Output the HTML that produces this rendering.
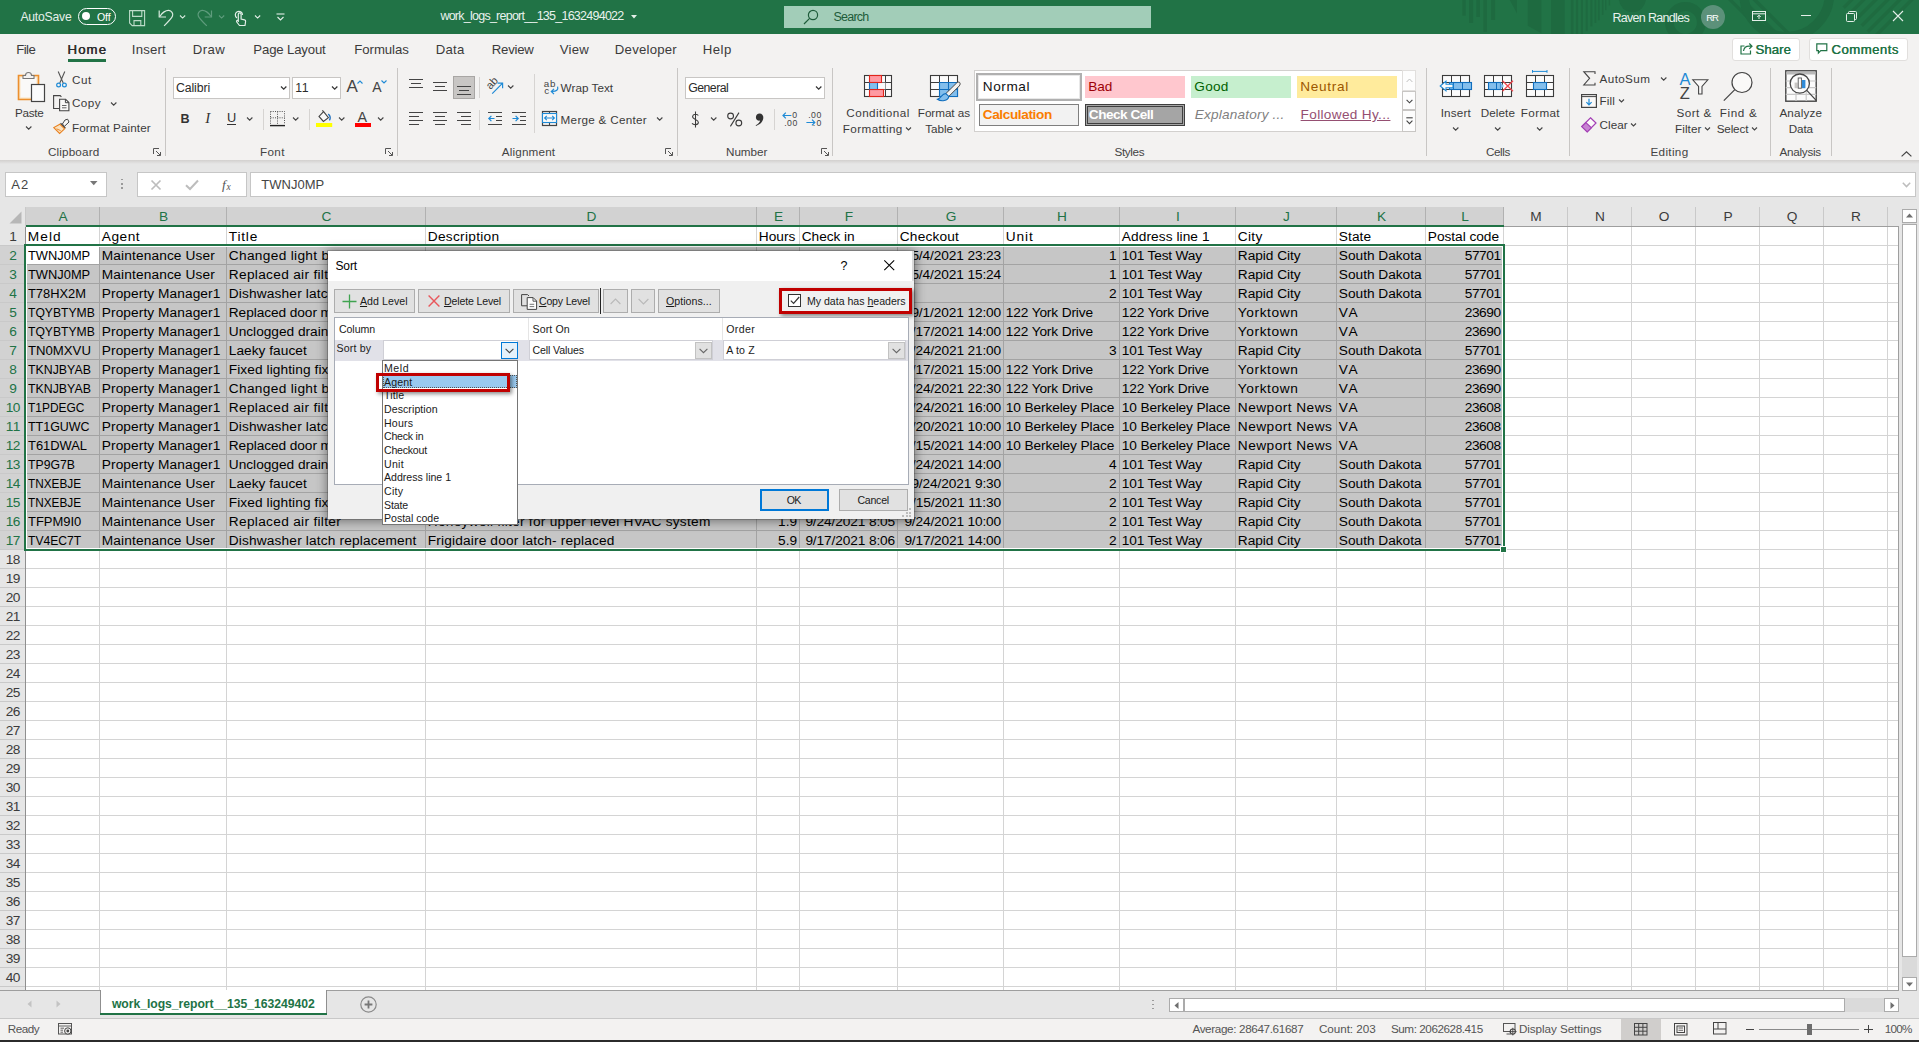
<!DOCTYPE html>
<html><head><meta charset="utf-8"><title>Excel - Sort</title>
<style>
html,body{margin:0;padding:0;}
body{width:1919px;height:1042px;overflow:hidden;position:relative;background:#e6e6e6;font-family:"Liberation Sans",sans-serif;color:#3b3b3b;font-size:12px;}
.a{position:absolute;box-sizing:border-box;}
.t{position:absolute;white-space:nowrap;line-height:20px;}
svg{overflow:visible;}
</style></head>
<body>
<div class="a" style="left:0px;top:0px;width:1919px;height:34px;background:#217346;"></div>
<svg class="a" style="left:1440px;top:0px;" width="479" height="34" viewBox="0 0 479 34" fill="none"><defs><clipPath id="tbc"><rect x="0" y="0" width="479" height="34"/></clipPath><clipPath id="tbr"><path d="M396 0 H479 V34 H430 Z"/></clipPath></defs><g fill="#1e6a40" clip-path="url(#tbc)"><rect x="22.4" y="0" width="3.3" height="15.6"/><rect x="29.1" y="0" width="4.1" height="23"/><rect x="36.3" y="0" width="3.7" height="17"/><rect x="43.4" y="0" width="3.6" height="31.8"/><rect x="51.2" y="0" width="3.9" height="20"/><path d="M69.8 0 H77 V13.5 Z"/><path d="M87.8 0 H101.4 V33.2 L87.8 25.7 Z"/><rect x="111.1" y="0" width="13.6" height="34"/><rect x="130.8" y="0" width="2.7" height="34"/><rect x="135.9" y="0" width="2.3" height="34"/><rect x="140.9" y="0" width="2" height="34"/><rect x="145.7" y="0" width="2" height="31.2"/><rect x="150.4" y="0" width="2" height="26.4"/><rect x="154.5" y="0" width="1.8" height="23"/><rect x="157.9" y="0" width="1.8" height="20.3"/><rect x="161.9" y="0" width="1.6" height="14.9"/><rect x="165" y="0" width="1.4" height="10.2"/><rect x="168.7" y="0" width="1.4" height="5.4"/><circle cx="192.4" cy="-1.4" r="13.5"/><circle cx="245.4" cy="22.4" r="15.9" fill="none" stroke="#1e6a40" stroke-width="8.8"/><path d="M288 0 H292.8 L326.8 34 H322 Z"/><path d="M300.3 0 H305.1 L339.1 34 H334.3 Z"/><path d="M312.5 0 H317.3 L351.3 34 H346.5 Z"/><circle cx="346.7" cy="-6.1" r="42.8" fill="none" stroke="#1e6a40" stroke-width="9.5"/><g clip-path="url(#tbr)"><path d="M409 0 H413.8 L379.8 34 H375 Z" opacity=".85"/><path d="M421 0 H425.8 L391.8 34 H387 Z" opacity=".85"/><path d="M433 0 H437.8 L403.8 34 H399 Z" opacity=".85"/><path d="M445 0 H449.8 L415.8 34 H411 Z" opacity=".85"/><path d="M457 0 H461.8 L427.8 34 H423 Z" opacity=".85"/><path d="M469 0 H473.8 L439.8 34 H435 Z" opacity=".85"/></g></g></svg>
<span class="t" style="left:20.39px;top:7.00px;font-size:12.20px;letter-spacing:-0.217px;color:#e4efe9;">AutoSave</span>
<div class="a" style="left:78px;top:8px;width:38px;height:16.5px;border:1px solid #fff;border-radius:9px;"></div>
<div class="a" style="left:82.3px;top:12px;width:8.2px;height:8.2px;background:#fff;border-radius:50%;"></div>
<span class="t" style="left:96.97px;top:7.00px;font-size:10.60px;letter-spacing:-0.136px;color:#fff;">Off</span>
<svg class="a" style="left:129px;top:10px;" width="17" height="17" viewBox="0 0 17 17" fill="none"><path d="M0.6 0.6 H15.6 V15.6 H3.2 L0.6 13 Z" stroke="#bddbc9" stroke-width="1.1"/><path d="M3.6 0.6 V6.4 H12.8 V0.6 M5 15.6 V10.6 H11.8 V15.6" stroke="#bddbc9" stroke-width="1.1"/></svg>
<svg class="a" style="left:158px;top:9px;" width="18" height="18" viewBox="0 0 18 18" fill="none"><path d="M1.2 1.4 V8 H8" stroke="#d9eadf" stroke-width="1.2"/><path d="M1.8 7.5 C4 3.5 8 1.2 10.8 1.4 C13.5 1.6 15.5 4.5 14.5 7 C14 8.5 12 11 6.1 16.9" stroke="#d9eadf" stroke-width="1.2"/></svg>
<svg class="a" style="left:178.9px;top:13.7px;" width="7.2" height="5.6" viewBox="0 0 7.2 5.6" fill="none"><path d="M1 1.5 L3.6 4.1 L6.2 1.5" stroke="#d9eadf" stroke-width="1.1"/></svg>
<svg class="a" style="left:197px;top:9px;" width="18" height="18" viewBox="0 0 18 18" fill="none"><path d="M14.5 1.4 V8 H7.7" stroke="#5f9c7d" stroke-width="1.2"/><path d="M14 7.5 C11.8 3.5 7.8 1.2 5 1.4 C2.3 1.6 0.3 4.5 1.3 7 C1.8 8.5 3.8 11 9.8 16.9" stroke="#5f9c7d" stroke-width="1.2"/></svg>
<svg class="a" style="left:217.9px;top:13.7px;" width="7.2" height="5.6" viewBox="0 0 7.2 5.6" fill="none"><path d="M1 1.5 L3.6 4.1 L6.2 1.5" stroke="#5f9c7d" stroke-width="1.1"/></svg>
<svg class="a" style="left:233px;top:9px;" width="14" height="18" viewBox="0 0 14 18" fill="none"><path d="M4 9 A3.6 3.6 0 1 1 9.5 6" stroke="#e4efe9" stroke-width="1.2"/><path d="M5.3 13 V5.2 A1.4 1.4 0 0 1 8.1 5.2 V10 L11.5 10.8 A1.5 1.5 0 0 1 12.6 12.5 L12 16.5 H6.5 L3.6 12.8 A1 1 0 0 1 5.3 11.8" stroke="#e4efe9" stroke-width="1.2"/></svg>
<svg class="a" style="left:253.9px;top:13.7px;" width="7.2" height="5.6" viewBox="0 0 7.2 5.6" fill="none"><path d="M1 1.5 L3.6 4.1 L6.2 1.5" stroke="#e4efe9" stroke-width="1.1"/></svg>
<svg class="a" style="left:276px;top:13px;" width="9" height="9" viewBox="0 0 9 9" fill="none"><path d="M0.5 1 H8.5" stroke="#e4efe9" stroke-width="1.1"/><path d="M1.5 4 L4.5 7 L7.5 4" stroke="#e4efe9" stroke-width="1.1"/></svg>
<span class="t" style="left:440.38px;top:6.00px;font-size:12.50px;letter-spacing:-0.750px;color:#e9f2ed;">work_logs_report__135_1632494022</span>
<svg class="a" style="left:630.5px;top:14.5px;" width="6" height="4" viewBox="0 0 6 4" fill="none"><path d="M0 0 H6 L3 3.5 Z" fill="#e4efe9"/></svg>
<div class="a" style="left:784px;top:6px;width:367px;height:22px;background:#a2cdb8;"></div>
<svg class="a" style="left:803px;top:9px;" width="16" height="16" viewBox="0 0 16 16" fill="none"><circle cx="10" cy="6" r="4.6" stroke="#1e5c3a" stroke-width="1.2"/><path d="M6.6 9.4 L1 15" stroke="#1e5c3a" stroke-width="1.2"/></svg>
<span class="t" style="left:833.38px;top:7.00px;font-size:12.50px;letter-spacing:-0.747px;color:#1e5c3a;">Search</span>
<span class="t" style="left:1612.38px;top:8.00px;font-size:12.50px;letter-spacing:-0.674px;color:#e9f2ed;">Raven Randles</span>
<div class="a" style="left:1700.5px;top:5px;width:24px;height:24px;background:#5c917a;border-radius:50%;"></div>
<span class="t" style="left:1706.33px;top:8.00px;font-size:9.50px;letter-spacing:-1.189px;color:#fff;">RR</span>
<svg class="a" style="left:1752px;top:11px;" width="14" height="10" viewBox="0 0 14 10" fill="none"><rect x="0.5" y="0.5" width="13" height="9" stroke="#e4efe9"/><path d="M0.5 2.8 H13.5" stroke="#e4efe9"/><path d="M7 8 V4.3 M5.2 6 L7 4.2 L8.8 6" stroke="#e4efe9"/></svg>
<div class="a" style="left:1801px;top:15px;width:10px;height:1px;background:#e4efe9;"></div>
<svg class="a" style="left:1846px;top:11px;" width="11" height="11" viewBox="0 0 11 11" fill="none"><rect x="0.5" y="2.5" width="8" height="8" rx="1" stroke="#e4efe9"/><path d="M2.5 2.5 V1.5 A1 1 0 0 1 3.5 0.5 H9.5 A1 1 0 0 1 10.5 1.5 V7.5 A1 1 0 0 1 9.5 8.5 H8.5" stroke="#e4efe9"/></svg>
<svg class="a" style="left:1893px;top:11px;" width="10" height="10" viewBox="0 0 10 10" fill="none"><path d="M0 0 L10 10 M10 0 L0 10" stroke="#e4efe9" stroke-width="1.1"/></svg>
<div class="a" style="left:0px;top:34px;width:1919px;height:126px;background:#f3f2f1;"></div>
<div class="a" style="left:0px;top:160px;width:1919px;height:4px;background:linear-gradient(#d2d0ce,#e6e6e6);"></div>
<span class="t" style="left:16.34px;top:40.00px;font-size:13.20px;letter-spacing:-0.599px;color:#3b3b3b;">File</span>
<span class="t" style="left:67.34px;top:40.00px;font-size:13.20px;letter-spacing:1.088px;color:#2b2b2b;text-shadow:0.5px 0 0 #2b2b2b;">Home</span>
<span class="t" style="left:131.84px;top:40.00px;font-size:13.20px;letter-spacing:0.194px;color:#3b3b3b;">Insert</span>
<span class="t" style="left:192.84px;top:40.00px;font-size:13.20px;letter-spacing:0.390px;color:#3b3b3b;">Draw</span>
<span class="t" style="left:253.34px;top:40.00px;font-size:13.20px;letter-spacing:-0.161px;color:#3b3b3b;">Page Layout</span>
<span class="t" style="left:354.34px;top:40.00px;font-size:13.20px;letter-spacing:-0.074px;color:#3b3b3b;">Formulas</span>
<span class="t" style="left:435.84px;top:40.00px;font-size:13.20px;letter-spacing:0.198px;color:#3b3b3b;">Data</span>
<span class="t" style="left:491.84px;top:40.00px;font-size:13.20px;letter-spacing:-0.260px;color:#3b3b3b;">Review</span>
<span class="t" style="left:559.84px;top:40.00px;font-size:13.20px;letter-spacing:0.198px;color:#3b3b3b;">View</span>
<span class="t" style="left:614.84px;top:40.00px;font-size:13.20px;letter-spacing:0.228px;color:#3b3b3b;">Developer</span>
<span class="t" style="left:702.84px;top:40.00px;font-size:13.20px;letter-spacing:0.442px;color:#3b3b3b;">Help</span>
<div class="a" style="left:68px;top:59px;width:38px;height:3px;background:#217346;"></div>
<div class="a" style="left:1732px;top:38px;width:67.5px;height:22.5px;background:#fff;border:1px solid #e1dfdd;border-radius:3px;"></div>
<svg class="a" style="left:1739.5px;top:42px;" width="13" height="13" viewBox="0 0 13 13" fill="none"><path d="M4.5 4 H1 V12 H10.5 V8.5" stroke="#217346" stroke-width="1.2"/><path d="M3.5 9 C4 6 6 4.2 9 4.2 H12 M9.3 1.5 L12 4.2 L9.3 6.9" stroke="#217346" stroke-width="1.2"/></svg>
<span class="t" style="left:1755.34px;top:40.00px;font-size:13.20px;letter-spacing:0.062px;color:#217346;text-shadow:0.35px 0 0 #217346;">Share</span>
<div class="a" style="left:1808.5px;top:38px;width:99px;height:22.5px;background:#fff;border:1px solid #e1dfdd;border-radius:3px;"></div>
<svg class="a" style="left:1816px;top:43px;" width="12" height="12" viewBox="0 0 12 12" fill="none"><path d="M0.8 0.8 H10.8 V7.6 H4.8 L2.4 10 V7.6 H0.8 Z" stroke="#217346" stroke-width="1.2"/></svg>
<span class="t" style="left:1831.34px;top:40.00px;font-size:13.20px;letter-spacing:0.455px;color:#217346;text-shadow:0.35px 0 0 #217346;">Comments</span>
<div class="a" style="left:5px;top:171.5px;width:102px;height:25.5px;background:#fff;border:1px solid #c6c6c6;"></div>
<span class="t" style="left:11.35px;top:175.00px;font-size:13.00px;letter-spacing:1.024px;color:#444;">A2</span>
<svg class="a" style="left:89.5px;top:180.5px;" width="8" height="5" viewBox="0 0 8 5" fill="none"><path d="M0 0 H7.5 L3.75 4.2 Z" fill="#777"/></svg>
<div class="a" style="left:121.2px;top:178.7px;width:1.8px;height:1.8px;background:#9a9a9a;"></div>
<div class="a" style="left:121.2px;top:182.9px;width:1.8px;height:1.8px;background:#9a9a9a;"></div>
<div class="a" style="left:121.2px;top:187px;width:1.8px;height:1.8px;background:#9a9a9a;"></div>
<div class="a" style="left:137px;top:171.5px;width:109.5px;height:25.5px;background:#fff;border:1px solid #c6c6c6;"></div>
<svg class="a" style="left:151px;top:179.5px;" width="10" height="10" viewBox="0 0 10 10" fill="none"><path d="M0.5 0.5 L9.5 9.5 M9.5 0.5 L0.5 9.5" stroke="#bdbdbd" stroke-width="1.7"/></svg>
<svg class="a" style="left:185px;top:179px;" width="14" height="11" viewBox="0 0 14 11" fill="none"><path d="M1 6.2 L5 10 L13 1.5" stroke="#bdbdbd" stroke-width="2"/></svg>
<span class="t" style="left:222.00px;top:175.00px;font-size:13.50px;color:#555;font-style:italic;font-family:'Liberation Serif',serif;">f</span>
<span class="t" style="left:226.50px;top:177.00px;font-size:9.50px;color:#555;font-style:italic;font-family:'Liberation Serif',serif;">x</span>
<div class="a" style="left:250px;top:171.5px;width:1665.5px;height:25.5px;background:#fff;border:1px solid #c6c6c6;"></div>
<span class="t" style="left:261.35px;top:175.00px;font-size:13.00px;letter-spacing:0.014px;color:#444;">TWNJ0MP</span>
<svg class="a" style="left:1902px;top:181.5px;" width="9" height="6" viewBox="0 0 9 6" fill="none"><path d="M0.8 0.8 L4.5 4.6 L8.2 0.8" stroke="#bdbdbd" stroke-width="1.5"/></svg>
<svg class="a" style="left:17px;top:71px;" width="29" height="32" viewBox="0 0 29 32" fill="none"><path d="M1.5 4.5 H21.5 V28.5 H1.5 Z" fill="#fbe3c0" stroke="#ec8f2e" stroke-width="1.6"/><path d="M3.5 6.5 H19.5 V26.5 H3.5 Z" fill="#faf9f8"/><path d="M6 7.5 V4.5 H8.5 A3 3 0 0 1 14.5 4.5 H17 V7.5 Z" fill="#f3f2f1" stroke="#777" stroke-width="1.1"/><rect x="14.5" y="13.5" width="13" height="17" fill="#fbfbfb" stroke="#444" stroke-width="1.2"/></svg>
<span class="t" style="left:14.91px;top:103.00px;font-size:11.70px;letter-spacing:-0.276px;color:#3b3b3b;">Paste</span>
<svg class="a" style="left:24.6px;top:125.45px;" width="7.4" height="5.7" viewBox="0 0 7.4 5.7" fill="none"><path d="M1 1.5 L3.7 4.2 L6.4 1.5" stroke="#444" stroke-width="1.1"/></svg>
<svg class="a" style="left:55.5px;top:70.5px;" width="11" height="17" viewBox="0 0 11 17" fill="none"><path d="M2.2 0.5 L7.2 12 M8.8 0.5 L3.8 12" stroke="#555" stroke-width="1.1"/><circle cx="2.6" cy="14" r="1.9" stroke="#1e8ad6" stroke-width="1.2"/><circle cx="8.4" cy="14" r="1.9" stroke="#1e8ad6" stroke-width="1.2"/></svg>
<span class="t" style="left:71.92px;top:70.00px;font-size:11.70px;letter-spacing:0.542px;color:#3b3b3b;">Cut</span>
<svg class="a" style="left:52.5px;top:95px;" width="17" height="17" viewBox="0 0 17 17" fill="none"><path d="M6.5 13.5 H0.6 V0.6 H7.2 L8.4 1.8" stroke="#444" stroke-width="1.1"/><path d="M6.6 4.2 H12.6 L15.9 7.5 V15.8 H6.6 Z" stroke="#444" stroke-width="1.1" fill="#faf9f8"/><path d="M12.4 4.4 V7.7 H15.7" stroke="#444" stroke-width="1"/><path d="M9 10.5 H13.5 M9 12.8 H13.5" stroke="#555" stroke-width="0.9"/></svg>
<span class="t" style="left:71.92px;top:93.00px;font-size:11.70px;letter-spacing:0.497px;color:#3b3b3b;">Copy</span>
<svg class="a" style="left:109.6px;top:100.65px;" width="7.4" height="5.7" viewBox="0 0 7.4 5.7" fill="none"><path d="M1 1.5 L3.7 4.2 L6.4 1.5" stroke="#444" stroke-width="1.1"/></svg>
<svg class="a" style="left:53px;top:119px;" width="17" height="16" viewBox="0 0 17 16" fill="none"><path d="M12 1 L14.6 0.2 L16 3 L11.6 7.2 L9.4 5 Z" stroke="#444" stroke-width="1" fill="#faf9f8"/><path d="M7.5 4.3 L12.4 9.2" stroke="#444" stroke-width="1.3"/><path d="M6.8 5.2 L0.8 8.6 L6.6 14.4 L11.6 9.8 Z" fill="#fbe3c0" stroke="#e8801f" stroke-width="1.1"/><path d="M3.5 9.8 L7.6 11.6" stroke="#e8801f" stroke-width="0.9"/></svg>
<span class="t" style="left:71.92px;top:118.00px;font-size:11.70px;letter-spacing:0.115px;color:#3b3b3b;">Format Painter</span>
<span class="t" style="left:47.91px;top:142.00px;font-size:11.70px;letter-spacing:0.157px;color:#444;">Clipboard</span>
<svg class="a" style="left:153.3px;top:147.6px;" width="8" height="8" viewBox="0 0 8 8" fill="none"><path d="M0.5 6 V0.5 H6" stroke="#555" stroke-width="1"/><path d="M3 3 L7.3 7.3 M7.5 4 V7.5 H4" stroke="#555" stroke-width="1"/></svg>
<div class="a" style="left:164.5px;top:68px;width:1px;height:88px;background:#c8c6c4;"></div>
<div class="a" style="left:173px;top:76.5px;width:117px;height:22.5px;background:#fff;border:1px solid #c8c6c4;"></div>
<span class="t" style="left:175.88px;top:78.00px;font-size:12.30px;letter-spacing:-0.084px;color:#2b2b2b;">Calibri</span>
<svg class="a" style="left:279.5px;top:85.45px;" width="7.4" height="5.7" viewBox="0 0 7.4 5.7" fill="none"><path d="M1 1.5 L3.7 4.2 L6.4 1.5" stroke="#333" stroke-width="1.2"/></svg>
<div class="a" style="left:292px;top:76.5px;width:49px;height:22.5px;background:#fff;border:1px solid #c8c6c4;"></div>
<span class="t" style="left:295.19px;top:78.00px;font-size:12.30px;letter-spacing:0.587px;color:#2b2b2b;">11</span>
<svg class="a" style="left:330.6px;top:85.45px;" width="7.4" height="5.7" viewBox="0 0 7.4 5.7" fill="none"><path d="M1 1.5 L3.7 4.2 L6.4 1.5" stroke="#333" stroke-width="1.2"/></svg>
<span class="t" style="left:346.50px;top:77.00px;font-size:17.00px;color:#444;">A</span>
<svg class="a" style="left:357px;top:79.5px;" width="6" height="4" viewBox="0 0 6 4" fill="none"><path d="M0.5 3.5 L3 1 L5.5 3.5" stroke="#1e8ad6" stroke-width="1.1"/></svg>
<span class="t" style="left:372.30px;top:77.00px;font-size:14.00px;color:#444;">A</span>
<svg class="a" style="left:381px;top:79.5px;" width="6" height="4" viewBox="0 0 6 4" fill="none"><path d="M0.5 0.5 L3 3 L5.5 0.5" stroke="#1e8ad6" stroke-width="1.1"/></svg>
<span class="t" style="left:180.60px;top:109.00px;font-size:12.60px;color:#333;font-weight:bold;">B</span>
<span class="t" style="left:205.30px;top:108.00px;font-size:13.50px;color:#333;font-style:italic;font-family:'Liberation Serif',serif;font-size:15px;">I</span>
<span class="t" style="left:227.00px;top:108.00px;font-size:12.80px;color:#333;">U</span>
<div class="a" style="left:227px;top:124px;width:9.2px;height:1.1px;background:#333;"></div>
<svg class="a" style="left:245.7px;top:116.35px;" width="7.4" height="5.7" viewBox="0 0 7.4 5.7" fill="none"><path d="M1 1.5 L3.7 4.2 L6.4 1.5" stroke="#444" stroke-width="1.1"/></svg>
<div class="a" style="left:262.5px;top:109px;width:1px;height:21px;background:#d6d4d2;"></div>
<svg class="a" style="left:270px;top:111px;" width="16" height="16" viewBox="0 0 16 16" fill="none"><path d="M0.5 0.5 H14.5 V13 M0.5 0.5 V13 M7.5 0.5 V13 M0.5 6.8 H14.5" stroke="#555" stroke-width="1" stroke-dasharray="1 1.25"/><path d="M0 14.6 H15" stroke="#222" stroke-width="1.4"/></svg>
<svg class="a" style="left:291.7px;top:116.35px;" width="7.4" height="5.7" viewBox="0 0 7.4 5.7" fill="none"><path d="M1 1.5 L3.7 4.2 L6.4 1.5" stroke="#444" stroke-width="1.1"/></svg>
<div class="a" style="left:308.5px;top:109px;width:1px;height:21px;background:#d6d4d2;"></div>
<svg class="a" style="left:316px;top:110px;" width="17" height="18" viewBox="0 0 17 18" fill="none"><path d="M7.6 1.6 L12.4 7.6 L7.4 11.4 L3 6.4 Z" stroke="#444" stroke-width="1.1" fill="#faf9f8"/><path d="M7.6 1.6 L6.3 0.3" stroke="#444" stroke-width="1.1"/><path d="M12.2 4.2 C14.6 5.6 14.6 8.4 13.4 10.4" stroke="#1e6fbf" stroke-width="1.4"/><rect x="0" y="13" width="16.2" height="4" fill="#ffff00"/></svg>
<svg class="a" style="left:337.6px;top:116.35px;" width="7.4" height="5.7" viewBox="0 0 7.4 5.7" fill="none"><path d="M1 1.5 L3.7 4.2 L6.4 1.5" stroke="#444" stroke-width="1.1"/></svg>
<span class="t" style="left:357.40px;top:107.00px;font-size:14.30px;color:#444;">A</span>
<div class="a" style="left:355px;top:123px;width:16.2px;height:4px;background:#ff0000;"></div>
<svg class="a" style="left:376.8px;top:116.35px;" width="7.4" height="5.7" viewBox="0 0 7.4 5.7" fill="none"><path d="M1 1.5 L3.7 4.2 L6.4 1.5" stroke="#444" stroke-width="1.1"/></svg>
<span class="t" style="left:260.12px;top:142.00px;font-size:11.70px;letter-spacing:0.299px;color:#444;">Font</span>
<svg class="a" style="left:385px;top:147.6px;" width="8" height="8" viewBox="0 0 8 8" fill="none"><path d="M0.5 6 V0.5 H6" stroke="#555" stroke-width="1"/><path d="M3 3 L7.3 7.3 M7.5 4 V7.5 H4" stroke="#555" stroke-width="1"/></svg>
<div class="a" style="left:396.5px;top:68px;width:1px;height:88px;background:#c8c6c4;"></div>
<div class="a" style="left:409px;top:79px;width:14px;height:1px;background:#444;"></div>
<div class="a" style="left:411px;top:83px;width:10px;height:1px;background:#444;"></div>
<div class="a" style="left:409px;top:87px;width:14px;height:1px;background:#444;"></div>
<div class="a" style="left:433px;top:82px;width:14px;height:1px;background:#444;"></div>
<div class="a" style="left:435px;top:86px;width:10px;height:1px;background:#444;"></div>
<div class="a" style="left:433px;top:90px;width:14px;height:1px;background:#444;"></div>
<div class="a" style="left:453px;top:76px;width:22px;height:23px;background:#c8c6c4;border:1px solid #a8a6a4;"></div>
<div class="a" style="left:457px;top:86px;width:14px;height:1px;background:#444;"></div>
<div class="a" style="left:459px;top:90px;width:10px;height:1px;background:#444;"></div>
<div class="a" style="left:457px;top:94px;width:14px;height:1px;background:#444;"></div>
<div class="a" style="left:479px;top:77px;width:1px;height:21px;background:#d6d4d2;"></div>
<svg class="a" style="left:486px;top:77px;" width="18" height="18" viewBox="0 0 18 18" fill="none"><text x="0" y="0" font-family="Liberation Sans" font-size="11" fill="#444" transform="translate(4.4 13) rotate(-47)">ab</text><path d="M6.2 16.6 L16.4 6.4 M11.6 6.2 H16.6 V11.2" stroke="#1e8ad6" stroke-width="1.2"/></svg>
<svg class="a" style="left:506.7px;top:84.45px;" width="7.4" height="5.7" viewBox="0 0 7.4 5.7" fill="none"><path d="M1 1.5 L3.7 4.2 L6.4 1.5" stroke="#444" stroke-width="1.1"/></svg>
<div class="a" style="left:534.3px;top:74px;width:1px;height:58.5px;background:#d6d4d2;"></div>
<span class="t" style="left:543.71px;top:74.00px;font-size:9.80px;letter-spacing:0.972px;color:#444;">ab</span>
<span class="t" style="left:544.20px;top:81.00px;font-size:9.80px;color:#444;">c</span>
<svg class="a" style="left:549.5px;top:86px;" width="9" height="9" viewBox="0 0 9 9" fill="none"><path d="M7.6 0.6 C8.6 3.6 6.6 5.6 1.6 5.4 M4 2.9 L1.3 5.5 L4 8.1" stroke="#1e8ad6" stroke-width="1.2"/></svg>
<span class="t" style="left:560.62px;top:78.00px;font-size:11.70px;letter-spacing:0.035px;color:#3b3b3b;">Wrap Text</span>
<div class="a" style="left:409px;top:112px;width:14px;height:1px;background:#444;"></div>
<div class="a" style="left:409px;top:116px;width:10px;height:1px;background:#444;"></div>
<div class="a" style="left:409px;top:120px;width:14px;height:1px;background:#444;"></div>
<div class="a" style="left:409px;top:124px;width:10px;height:1px;background:#444;"></div>
<div class="a" style="left:433px;top:112px;width:14px;height:1px;background:#444;"></div>
<div class="a" style="left:435px;top:116px;width:10px;height:1px;background:#444;"></div>
<div class="a" style="left:433px;top:120px;width:14px;height:1px;background:#444;"></div>
<div class="a" style="left:435px;top:124px;width:10px;height:1px;background:#444;"></div>
<div class="a" style="left:457px;top:112px;width:14px;height:1px;background:#444;"></div>
<div class="a" style="left:461px;top:116px;width:10px;height:1px;background:#444;"></div>
<div class="a" style="left:457px;top:120px;width:14px;height:1px;background:#444;"></div>
<div class="a" style="left:461px;top:124px;width:10px;height:1px;background:#444;"></div>
<div class="a" style="left:479px;top:109.5px;width:1px;height:20px;background:#d6d4d2;"></div>
<div class="a" style="left:488px;top:112px;width:14px;height:1px;background:#444;"></div>
<div class="a" style="left:488px;top:124px;width:14px;height:1px;background:#444;"></div>
<div class="a" style="left:496px;top:116px;width:6px;height:1px;background:#444;"></div>
<div class="a" style="left:496px;top:120px;width:6px;height:1px;background:#444;"></div>
<svg class="a" style="left:487.5px;top:115px;" width="7" height="7" viewBox="0 0 7 7" fill="none"><path d="M6.5 3.5 H1 M3.4 0.9 L0.8 3.5 L3.4 6.1" stroke="#1e8ad6" stroke-width="1.2"/></svg>
<div class="a" style="left:512px;top:112px;width:14px;height:1px;background:#444;"></div>
<div class="a" style="left:512px;top:124px;width:14px;height:1px;background:#444;"></div>
<div class="a" style="left:520px;top:116px;width:6px;height:1px;background:#444;"></div>
<div class="a" style="left:520px;top:120px;width:6px;height:1px;background:#444;"></div>
<svg class="a" style="left:511.5px;top:115px;" width="7" height="7" viewBox="0 0 7 7" fill="none"><path d="M0.5 3.5 H6 M3.6 0.9 L6.2 3.5 L3.6 6.1" stroke="#1e8ad6" stroke-width="1.2"/></svg>
<svg class="a" style="left:542px;top:111px;" width="16" height="15" viewBox="0 0 16 15" fill="none"><rect x="0.5" y="0.5" width="14" height="14" stroke="#444" stroke-width="1.2"/><path d="M7.5 0.5 V2.5 M7.5 11.5 V14.5" stroke="#444" stroke-width="1.1"/><rect x="0.5" y="2.5" width="14" height="9" stroke="#1e8ad6" stroke-width="1.1" fill="#faf9f8"/><path d="M2.6 7 H12.4 M4.8 4.8 L2.6 7 L4.8 9.2 M10.2 4.8 L12.4 7 L10.2 9.2" stroke="#1e8ad6" stroke-width="1.1"/></svg>
<span class="t" style="left:560.62px;top:110.00px;font-size:11.70px;letter-spacing:0.268px;color:#3b3b3b;">Merge &amp; Center</span>
<svg class="a" style="left:655.8px;top:116.35px;" width="7.4" height="5.7" viewBox="0 0 7.4 5.7" fill="none"><path d="M1 1.5 L3.7 4.2 L6.4 1.5" stroke="#444" stroke-width="1.1"/></svg>
<span class="t" style="left:501.72px;top:142.00px;font-size:11.70px;letter-spacing:0.175px;color:#444;">Alignment</span>
<svg class="a" style="left:665px;top:147.6px;" width="8" height="8" viewBox="0 0 8 8" fill="none"><path d="M0.5 6 V0.5 H6" stroke="#555" stroke-width="1"/><path d="M3 3 L7.3 7.3 M7.5 4 V7.5 H4" stroke="#555" stroke-width="1"/></svg>
<div class="a" style="left:676.5px;top:68px;width:1px;height:88px;background:#c8c6c4;"></div>
<div class="a" style="left:685px;top:76.5px;width:140px;height:22.5px;background:#fff;border:1px solid #c8c6c4;"></div>
<span class="t" style="left:688.18px;top:78.00px;font-size:12.30px;letter-spacing:-0.516px;color:#2b2b2b;">General</span>
<svg class="a" style="left:814.6px;top:85.45px;" width="7.4" height="5.7" viewBox="0 0 7.4 5.7" fill="none"><path d="M1 1.5 L3.7 4.2 L6.4 1.5" stroke="#333" stroke-width="1.2"/></svg>
<svg class="a" style="left:691px;top:110.5px;" width="9" height="17" viewBox="0 0 9 17" fill="none"><path d="M7.3 4.6 C6.4 3 2 2.6 1.6 5.4 C1.2 8.6 7.6 8.2 7.4 11.4 C7.2 14.2 2.6 14.2 1 12.4 M4.5 0.4 V16.6" stroke="#3b3b3b" stroke-width="1.05"/></svg>
<svg class="a" style="left:709.6px;top:116.45px;" width="7.4" height="5.7" viewBox="0 0 7.4 5.7" fill="none"><path d="M1 1.5 L3.7 4.2 L6.4 1.5" stroke="#444" stroke-width="1.1"/></svg>
<svg class="a" style="left:727px;top:111.5px;" width="16" height="15" viewBox="0 0 16 15" fill="none"><circle cx="3.6" cy="4" r="2.9" stroke="#3b3b3b" stroke-width="1.1"/><circle cx="11.8" cy="11" r="2.9" stroke="#3b3b3b" stroke-width="1.1"/><path d="M12 0.6 L3.4 14.4" stroke="#3b3b3b" stroke-width="1.1"/></svg>
<svg class="a" style="left:755px;top:112.5px;" width="9" height="13.5" viewBox="0 0 9 13.5" fill="none"><path d="M4.6 0.4 C6.9 0.4 8.3 2.1 8.3 4.6 C8.3 8.6 5.2 11.6 1 12.9 L0.7 12.2 C3.3 11 4.9 9.4 5.1 7.6 C4.9 7.7 4.6 7.7 4.3 7.7 C2.3 7.7 0.9 6.2 0.9 4.2 C0.9 2 2.5 0.4 4.6 0.4 Z" fill="#333"/></svg>
<div class="a" style="left:774px;top:109px;width:1px;height:21px;background:#d6d4d2;"></div>
<span class="t" style="left:792.30px;top:105.00px;font-size:8.70px;color:#444;">0</span>
<span class="t" style="left:784.17px;top:113.00px;font-size:8.70px;letter-spacing:0.539px;color:#444;">.00</span>
<svg class="a" style="left:781.5px;top:112px;" width="10" height="7" viewBox="0 0 10 7" fill="none"><path d="M9.4 3.5 H1 M3.8 0.7 L1 3.5 L3.8 6.3" stroke="#1e8ad6" stroke-width="1.2"/></svg>
<span class="t" style="left:808.17px;top:105.00px;font-size:8.70px;letter-spacing:0.539px;color:#444;">.00</span>
<span class="t" style="left:812.77px;top:113.00px;font-size:8.70px;letter-spacing:1.307px;color:#444;">.0</span>
<svg class="a" style="left:805.5px;top:119px;" width="10" height="7" viewBox="0 0 10 7" fill="none"><path d="M0.4 3.5 H8.8 M6 0.7 L8.8 3.5 L6 6.3" stroke="#1e8ad6" stroke-width="1.2"/></svg>
<span class="t" style="left:726.01px;top:142.00px;font-size:11.70px;letter-spacing:-0.038px;color:#444;">Number</span>
<svg class="a" style="left:820.5px;top:147.6px;" width="8" height="8" viewBox="0 0 8 8" fill="none"><path d="M0.5 6 V0.5 H6" stroke="#555" stroke-width="1"/><path d="M3 3 L7.3 7.3 M7.5 4 V7.5 H4" stroke="#555" stroke-width="1"/></svg>
<div class="a" style="left:832.3px;top:68px;width:1px;height:88px;background:#c8c6c4;"></div>
<svg class="a" style="left:864px;top:75px;" width="28" height="22" viewBox="0 0 28 22" fill="none"><rect x="0.5" y="0.5" width="27" height="21" fill="#fbfbfb" stroke="#3b3b3b" stroke-width="1.1"/><path d="M5.5 0.5 V21.5 M21.5 0.5 V21.5 M0.5 7.5 H27.5 M0.5 14.5 H27.5" stroke="#3b3b3b" stroke-width="1"/><rect x="13.5" y="7.7" width="8" height="6.6" fill="#fbfbfb"/><rect x="5.5" y="0.5" width="12" height="7" fill="#ff9aa2" stroke="#e1251b" stroke-width="1.1"/><rect x="5.5" y="14.5" width="14" height="7" fill="#ff9aa2" stroke="#e1251b" stroke-width="1.1"/><rect x="5.5" y="7.5" width="8" height="7" fill="#83beec" stroke="#106ebe" stroke-width="1.1"/><path d="M5.5 7.5 H17.5 M5.5 14.5 H19.5" stroke="#e1251b" stroke-width="1.1"/></svg>
<span class="t" style="left:846.31px;top:103.00px;font-size:11.70px;letter-spacing:0.450px;color:#3b3b3b;">Conditional</span>
<span class="t" style="left:842.81px;top:119.00px;font-size:11.70px;letter-spacing:0.403px;color:#3b3b3b;">Formatting</span>
<svg class="a" style="left:904.9px;top:125.85px;" width="7" height="5.5" viewBox="0 0 7 5.5" fill="none"><path d="M1 1.5 L3.5 4 L6 1.5" stroke="#444" stroke-width="1.1"/></svg>
<svg class="a" style="left:930px;top:75px;" width="31" height="28" viewBox="0 0 31 28" fill="none"><rect x="0.5" y="0.5" width="27" height="21" fill="#fbfbfb" stroke="#3b3b3b" stroke-width="1.1"/><rect x="9.5" y="7.5" width="18" height="14" fill="#83beec"/><path d="M9.5 0.5 V7.5 M18.5 0.5 V7.5 M0.5 7.5 H9.5 M0.5 14.5 H9.5" stroke="#3b3b3b" stroke-width="1"/><path d="M9.5 7.5 V21.5 H27.5 V7.5 Z M18.5 7.5 V21.5 M9.5 14.5 H27.5" stroke="#106ebe" stroke-width="1.1"/><path d="M29.6 7.4 C30.5 8.4 30.2 9.8 29.2 11 L18.6 21.6 L15.6 18.8 L26.4 8.2 C27.4 7.2 28.8 6.7 29.6 7.4 Z" fill="#f3f2f1" stroke="#4a4a4a" stroke-width="1"/><path d="M15.8 18.6 C11.6 18.4 11.8 23 7.4 24.2 C11 26.8 18.2 26.2 18.8 21.4 Z" fill="#83beec" stroke="#106ebe" stroke-width="1.1"/></svg>
<span class="t" style="left:917.81px;top:103.00px;font-size:11.70px;letter-spacing:-0.040px;color:#3b3b3b;">Format as</span>
<span class="t" style="left:925.21px;top:119.00px;font-size:11.70px;letter-spacing:-0.042px;color:#3b3b3b;">Table</span>
<svg class="a" style="left:955.2px;top:125.85px;" width="7" height="5.5" viewBox="0 0 7 5.5" fill="none"><path d="M1 1.5 L3.5 4 L6 1.5" stroke="#444" stroke-width="1.1"/></svg>
<div class="a" style="left:974px;top:70px;width:442px;height:62px;background:#fff;border:1px solid #d2d0ce;"></div>
<div class="a" style="left:976px;top:73px;width:105.5px;height:28px;background:#fff;border:2px solid #b0b0b0;box-shadow:inset 0 0 0 1px #e8e8e8;"></div>
<span class="t" style="left:982.72px;top:77.00px;font-size:13.60px;letter-spacing:0.597px;color:#111;">Normal</span>
<div class="a" style="left:1085px;top:76px;width:100px;height:22px;background:#ffc7ce;"></div>
<span class="t" style="left:1088.32px;top:77.00px;font-size:13.60px;letter-spacing:-0.096px;color:#9c0006;">Bad</span>
<div class="a" style="left:1191px;top:76px;width:100px;height:22px;background:#c6efce;"></div>
<span class="t" style="left:1194.32px;top:77.00px;font-size:13.60px;letter-spacing:0.243px;color:#006100;">Good</span>
<div class="a" style="left:1297px;top:76px;width:100px;height:22px;background:#ffeb9c;"></div>
<span class="t" style="left:1300.32px;top:77.00px;font-size:13.60px;letter-spacing:0.695px;color:#9c5700;">Neutral</span>
<div class="a" style="left:979px;top:104px;width:100px;height:22px;background:#f2f2f2;border:1px solid #7f7f7f;"></div>
<span class="t" style="left:982.72px;top:105.00px;font-size:13.60px;letter-spacing:-0.377px;color:#fa7d00;font-weight:bold;">Calculation</span>
<div class="a" style="left:1085px;top:104px;width:100px;height:22px;background:#a5a5a5;border:3px double #3f3f3f;"></div>
<span class="t" style="left:1088.82px;top:105.00px;font-size:13.60px;letter-spacing:-0.502px;color:#fff;font-weight:bold;">Check Cell</span>
<span class="t" style="left:1194.82px;top:105.00px;font-size:13.60px;letter-spacing:0.185px;color:#7f7f7f;font-style:italic;">Explanatory ...</span>
<span class="t" style="left:1300.62px;top:105.00px;font-size:13.60px;letter-spacing:0.336px;color:#954f72;text-decoration:underline;">Followed Hy...</span>
<div class="a" style="left:1401.5px;top:70px;width:14.5px;height:21px;background:#fdfdfd;border:1px solid #e1dfdd;"></div>
<svg class="a" style="left:1405.5px;top:77.5px;" width="7" height="5" viewBox="0 0 7 5" fill="none"><path d="M0.6 4 L3.5 1 L6.4 4" stroke="#c0c0c0" stroke-width="1"/></svg>
<div class="a" style="left:1401.5px;top:91px;width:14.5px;height:19px;background:#fdfdfd;border:1px solid #c8c6c4;"></div>
<svg class="a" style="left:1405.5px;top:98.5px;" width="7" height="5" viewBox="0 0 7 5" fill="none"><path d="M0.6 0.8 L3.5 3.8 L6.4 0.8" stroke="#444" stroke-width="1.1"/></svg>
<div class="a" style="left:1401.5px;top:110px;width:14.5px;height:22px;background:#fdfdfd;border:1px solid #c8c6c4;"></div>
<svg class="a" style="left:1405.5px;top:116.5px;" width="7" height="8" viewBox="0 0 7 8" fill="none"><path d="M0.3 0.8 H6.7" stroke="#444" stroke-width="1.1"/><path d="M0.6 3.6 L3.5 6.6 L6.4 3.6" stroke="#444" stroke-width="1.1"/></svg>
<span class="t" style="left:1114.51px;top:142.00px;font-size:11.70px;letter-spacing:-0.368px;color:#444;">Styles</span>
<div class="a" style="left:1426px;top:68px;width:1px;height:88px;background:#c8c6c4;"></div>
<svg class="a" style="left:1442px;top:75px;" width="32" height="23" viewBox="0 0 32 23" fill="none"><rect x="0.5" y="0.5" width="27" height="21" fill="#fbfbfb" stroke="#3b3b3b" stroke-width="1.1"/><path d="M9.5 0.5 V21.5 M18.5 0.5 V21.5 M0.5 7.5 H27.5 M0.5 14.5 H27.5" stroke="#3b3b3b" stroke-width="1"/><rect x="7.5" y="7.5" width="22" height="7" fill="#83beec" stroke="#106ebe" stroke-width="1.1"/><path d="M11.5 7.5 V14.5 M20.5 7.5 V14.5" stroke="#106ebe" stroke-width="1"/><path d="M11 9.2 H4 V6.2 L-1.8 11 L4 15.8 V12.8 H11 Z" fill="#fbfbfb" stroke="#1e8ad6" stroke-width="1.1"/></svg>
<span class="t" style="left:1440.71px;top:103.00px;font-size:11.70px;letter-spacing:0.151px;color:#3b3b3b;">Insert</span>
<svg class="a" style="left:1451.9px;top:125.65px;" width="7.4" height="5.7" viewBox="0 0 7.4 5.7" fill="none"><path d="M1 1.5 L3.7 4.2 L6.4 1.5" stroke="#444" stroke-width="1.1"/></svg>
<svg class="a" style="left:1484px;top:75px;" width="32" height="23" viewBox="0 0 32 23" fill="none"><rect x="0.5" y="0.5" width="27" height="21" fill="#fbfbfb" stroke="#3b3b3b" stroke-width="1.1"/><path d="M9.5 0.5 V21.5 M18.5 0.5 V21.5 M0.5 7.5 H27.5 M0.5 14.5 H27.5" stroke="#3b3b3b" stroke-width="1"/><rect x="4.5" y="7.5" width="12" height="7" fill="#83beec" stroke="#106ebe" stroke-width="1.1"/><path d="M16.5 7.5 L20 11 L16.5 14.5" fill="#83beec"/><path d="M12.5 7.5 V14.5" stroke="#106ebe" stroke-width="1"/><path d="M18.5 5.8 L29 16.2 M29 5.8 L18.5 16.2" stroke="#f0474e" stroke-width="1.2"/></svg>
<span class="t" style="left:1480.82px;top:103.00px;font-size:11.70px;letter-spacing:0.058px;color:#3b3b3b;">Delete</span>
<svg class="a" style="left:1493.9px;top:125.65px;" width="7.4" height="5.7" viewBox="0 0 7.4 5.7" fill="none"><path d="M1 1.5 L3.7 4.2 L6.4 1.5" stroke="#444" stroke-width="1.1"/></svg>
<svg class="a" style="left:1526px;top:75px;" width="29" height="23" viewBox="0 0 29 23" fill="none"><rect x="0.5" y="0.5" width="27" height="21" fill="#fbfbfb" stroke="#3b3b3b" stroke-width="1.1"/><path d="M9.5 0.5 V21.5 M18.5 0.5 V21.5 M0.5 7.5 H27.5 M0.5 14.5 H27.5" stroke="#3b3b3b" stroke-width="1"/><rect x="7.5" y="7.5" width="13" height="7" fill="#83beec" stroke="#106ebe" stroke-width="1.1"/><path d="M6.5 -3.6 H21 M6.5 -5 V-2.2 M21 -5 V-2.2" stroke="#1e8ad6" stroke-width="1"/></svg>
<span class="t" style="left:1520.82px;top:103.00px;font-size:11.70px;letter-spacing:0.354px;color:#3b3b3b;">Format</span>
<svg class="a" style="left:1535.7px;top:125.65px;" width="7.4" height="5.7" viewBox="0 0 7.4 5.7" fill="none"><path d="M1 1.5 L3.7 4.2 L6.4 1.5" stroke="#444" stroke-width="1.1"/></svg>
<span class="t" style="left:1485.91px;top:142.00px;font-size:11.70px;letter-spacing:-0.374px;color:#444;">Cells</span>
<div class="a" style="left:1569.3px;top:68px;width:1px;height:88px;background:#c8c6c4;"></div>
<svg class="a" style="left:1582.5px;top:70.5px;" width="13" height="15" viewBox="0 0 13 15" fill="none"><path d="M12 3 V0.7 H0.8 L6.6 7.3 L0.8 14 H12 V11.7" stroke="#444" stroke-width="1.1"/></svg>
<span class="t" style="left:1599.62px;top:69.00px;font-size:11.70px;letter-spacing:0.368px;color:#3b3b3b;">AutoSum</span>
<svg class="a" style="left:1660px;top:75.75px;" width="7.4" height="5.7" viewBox="0 0 7.4 5.7" fill="none"><path d="M1 1.5 L3.7 4.2 L6.4 1.5" stroke="#444" stroke-width="1.1"/></svg>
<svg class="a" style="left:1581px;top:94px;" width="16" height="14" viewBox="0 0 16 14" fill="none"><rect x="0.6" y="0.6" width="14.8" height="12.8" stroke="#444" stroke-width="1.2" fill="#faf9f8"/><path d="M0.6 2.6 H15.4" stroke="#444" stroke-width="1"/><path d="M8 4.8 V10.6 M5.4 8.2 L8 10.8 L10.6 8.2" stroke="#1e8ad6" stroke-width="1.2"/></svg>
<span class="t" style="left:1599.62px;top:91.00px;font-size:11.70px;letter-spacing:0.116px;color:#3b3b3b;">Fill</span>
<svg class="a" style="left:1618px;top:98.45px;" width="7" height="5.5" viewBox="0 0 7 5.5" fill="none"><path d="M1 1.5 L3.5 4 L6 1.5" stroke="#444" stroke-width="1.1"/></svg>
<svg class="a" style="left:1581px;top:116.5px;" width="16" height="16" viewBox="0 0 16 16" fill="none"><path d="M9.5 0.8 L15 6 L6.2 14.8 L0.8 9.6 Z" stroke="#a33fb5" stroke-width="1.2" fill="#faf9f8"/><path d="M4.9 5.6 L10.4 10.8 L6.2 14.8 L0.8 9.6 Z" fill="#c783d2" stroke="#a33fb5" stroke-width="1.1"/></svg>
<span class="t" style="left:1599.62px;top:115.00px;font-size:11.70px;letter-spacing:0.037px;color:#3b3b3b;">Clear</span>
<svg class="a" style="left:1630.2px;top:121.85px;" width="7" height="5.5" viewBox="0 0 7 5.5" fill="none"><path d="M1 1.5 L3.5 4 L6 1.5" stroke="#444" stroke-width="1.1"/></svg>
<span class="t" style="left:1679.60px;top:69.00px;font-size:16.50px;color:#1e8ad6;">A</span>
<span class="t" style="left:1679.80px;top:83.00px;font-size:16.50px;color:#444;">Z</span>
<svg class="a" style="left:1691.5px;top:78.5px;" width="17" height="17" viewBox="0 0 17 17" fill="none"><path d="M0.8 0.8 H15.8 L10 7.4 V15 H6.6 V7.4 Z" stroke="#444" stroke-width="1.1" fill="#faf9f8"/></svg>
<span class="t" style="left:1676.41px;top:103.00px;font-size:11.70px;letter-spacing:0.501px;color:#3b3b3b;">Sort &amp;</span>
<span class="t" style="left:1675.01px;top:119.00px;font-size:11.70px;letter-spacing:0.081px;color:#3b3b3b;">Filter</span>
<svg class="a" style="left:1704.1px;top:125.85px;" width="7" height="5.5" viewBox="0 0 7 5.5" fill="none"><path d="M1 1.5 L3.5 4 L6 1.5" stroke="#444" stroke-width="1.1"/></svg>
<svg class="a" style="left:1722.5px;top:71.5px;" width="30" height="30" viewBox="0 0 30 30" fill="none"><circle cx="19" cy="10.5" r="10" stroke="#444" stroke-width="1.2" fill="#faf9f8"/><path d="M11.8 17.7 L0.8 28.7" stroke="#444" stroke-width="1.2"/></svg>
<span class="t" style="left:1719.71px;top:103.00px;font-size:11.70px;letter-spacing:0.641px;color:#3b3b3b;">Find &amp;</span>
<span class="t" style="left:1716.71px;top:119.00px;font-size:11.70px;letter-spacing:-0.159px;color:#3b3b3b;">Select</span>
<svg class="a" style="left:1751.2px;top:125.85px;" width="7" height="5.5" viewBox="0 0 7 5.5" fill="none"><path d="M1 1.5 L3.5 4 L6 1.5" stroke="#444" stroke-width="1.1"/></svg>
<span class="t" style="left:1650.41px;top:142.00px;font-size:11.70px;letter-spacing:0.339px;color:#444;">Editing</span>
<div class="a" style="left:1769.6px;top:68px;width:1px;height:88px;background:#c8c6c4;"></div>
<svg class="a" style="left:1785px;top:70px;" width="32" height="32" viewBox="0 0 32 32" fill="none"><rect x="0.8" y="0.8" width="30.4" height="30.4" fill="#fbfbfb" stroke="#444" stroke-width="1.4"/><rect x="1.5" y="1.5" width="29" height="3" fill="#b9b9b9"/><path d="M0.8 11 H31.2 M0.8 17.6 H31.2 M0.8 24.4 H31.2 M11 11 V31 M21.2 11 V31" stroke="#c8c8c8" stroke-width="1.2"/><circle cx="14.8" cy="13.6" r="9.6" fill="#fbfbfb" stroke="#444" stroke-width="1.3"/><rect x="9.6" y="12.6" width="3" height="5.6" fill="#c8c6c4"/><rect x="13.2" y="8" width="3.2" height="10.2" fill="#fbfbfb" stroke="#555" stroke-width="0.9"/><rect x="17" y="10" width="3.4" height="8.2" fill="#2f8bd8"/><path d="M21.8 20.4 L31.4 30.6" stroke="#444" stroke-width="1.3"/></svg>
<span class="t" style="left:1779.41px;top:103.00px;font-size:11.70px;letter-spacing:0.149px;color:#3b3b3b;">Analyze</span>
<span class="t" style="left:1788.82px;top:119.00px;font-size:11.70px;letter-spacing:-0.172px;color:#3b3b3b;">Data</span>
<span class="t" style="left:1779.41px;top:142.00px;font-size:11.70px;letter-spacing:-0.249px;color:#444;">Analysis</span>
<div class="a" style="left:1831.4px;top:68px;width:1px;height:88px;background:#c8c6c4;"></div>
<svg class="a" style="left:1901px;top:150.5px;" width="11" height="6" viewBox="0 0 11 6" fill="none"><path d="M0.6 5.4 L5.5 0.8 L10.4 5.4" stroke="#444" stroke-width="1.2"/></svg>
<div class="a" style="left:26px;top:227px;width:1872px;height:763px;background:#fff;"></div>
<div class="a" style="left:26px;top:227px;width:1872px;height:763px;background:repeating-linear-gradient(to bottom, transparent 0, transparent 18px, #d4d4d4 18px, #d4d4d4 19px);"></div>
<div class="a" style="left:99px;top:227px;width:1px;height:763px;background:#d4d4d4;"></div>
<div class="a" style="left:226px;top:227px;width:1px;height:763px;background:#d4d4d4;"></div>
<div class="a" style="left:425px;top:227px;width:1px;height:763px;background:#d4d4d4;"></div>
<div class="a" style="left:756px;top:227px;width:1px;height:763px;background:#d4d4d4;"></div>
<div class="a" style="left:799px;top:227px;width:1px;height:763px;background:#d4d4d4;"></div>
<div class="a" style="left:897px;top:227px;width:1px;height:763px;background:#d4d4d4;"></div>
<div class="a" style="left:1003px;top:227px;width:1px;height:763px;background:#d4d4d4;"></div>
<div class="a" style="left:1119px;top:227px;width:1px;height:763px;background:#d4d4d4;"></div>
<div class="a" style="left:1235px;top:227px;width:1px;height:763px;background:#d4d4d4;"></div>
<div class="a" style="left:1336px;top:227px;width:1px;height:763px;background:#d4d4d4;"></div>
<div class="a" style="left:1425px;top:227px;width:1px;height:763px;background:#d4d4d4;"></div>
<div class="a" style="left:1503px;top:227px;width:1px;height:763px;background:#d4d4d4;"></div>
<div class="a" style="left:1567px;top:227px;width:1px;height:763px;background:#d4d4d4;"></div>
<div class="a" style="left:1631px;top:227px;width:1px;height:763px;background:#d4d4d4;"></div>
<div class="a" style="left:1695px;top:227px;width:1px;height:763px;background:#d4d4d4;"></div>
<div class="a" style="left:1759px;top:227px;width:1px;height:763px;background:#d4d4d4;"></div>
<div class="a" style="left:1823px;top:227px;width:1px;height:763px;background:#d4d4d4;"></div>
<div class="a" style="left:1887px;top:227px;width:1px;height:763px;background:#d4d4d4;"></div>
<div class="a" style="left:26px;top:246px;width:1477px;height:303px;background:#c6c6c6;"></div>
<div class="a" style="left:26px;top:246px;width:1477px;height:303px;background:repeating-linear-gradient(to bottom, transparent 0, transparent 18px, #a3a3a3 18px, #a3a3a3 19px);"></div>
<div class="a" style="left:99px;top:246px;width:1px;height:303px;background:#a3a3a3;"></div>
<div class="a" style="left:226px;top:246px;width:1px;height:303px;background:#a3a3a3;"></div>
<div class="a" style="left:425px;top:246px;width:1px;height:303px;background:#a3a3a3;"></div>
<div class="a" style="left:756px;top:246px;width:1px;height:303px;background:#a3a3a3;"></div>
<div class="a" style="left:799px;top:246px;width:1px;height:303px;background:#a3a3a3;"></div>
<div class="a" style="left:897px;top:246px;width:1px;height:303px;background:#a3a3a3;"></div>
<div class="a" style="left:1003px;top:246px;width:1px;height:303px;background:#a3a3a3;"></div>
<div class="a" style="left:1119px;top:246px;width:1px;height:303px;background:#a3a3a3;"></div>
<div class="a" style="left:1235px;top:246px;width:1px;height:303px;background:#a3a3a3;"></div>
<div class="a" style="left:1336px;top:246px;width:1px;height:303px;background:#a3a3a3;"></div>
<div class="a" style="left:1425px;top:246px;width:1px;height:303px;background:#a3a3a3;"></div>
<div class="a" style="left:27px;top:247px;width:72px;height:17px;background:#fff;"></div>
<div class="a" style="left:0px;top:207px;width:1899px;height:20px;background:#e6e6e6;"></div>
<div class="a" style="left:26px;top:207px;width:1478px;height:18px;background:#d2d2d2;"></div>
<div class="a" style="left:26px;top:225px;width:1478px;height:2px;background:#217346;"></div>
<div class="a" style="left:1504px;top:226px;width:395px;height:1px;background:#9e9e9e;"></div>
<div class="a" style="left:99px;top:207px;width:1px;height:18px;background:#b1b1b1;"></div>
<span class="t" style="left:58.43px;top:207.00px;font-size:13.70px;color:#217346;">A</span>
<div class="a" style="left:226px;top:207px;width:1px;height:18px;background:#b1b1b1;"></div>
<span class="t" style="left:158.93px;top:207.00px;font-size:13.70px;color:#217346;">B</span>
<div class="a" style="left:425px;top:207px;width:1px;height:18px;background:#b1b1b1;"></div>
<span class="t" style="left:321.55px;top:207.00px;font-size:13.70px;color:#217346;">C</span>
<div class="a" style="left:756px;top:207px;width:1px;height:18px;background:#b1b1b1;"></div>
<span class="t" style="left:586.55px;top:207.00px;font-size:13.70px;color:#217346;">D</span>
<div class="a" style="left:799px;top:207px;width:1px;height:18px;background:#b1b1b1;"></div>
<span class="t" style="left:773.93px;top:207.00px;font-size:13.70px;color:#217346;">E</span>
<div class="a" style="left:897px;top:207px;width:1px;height:18px;background:#b1b1b1;"></div>
<span class="t" style="left:844.81px;top:207.00px;font-size:13.70px;color:#217346;">F</span>
<div class="a" style="left:1003px;top:207px;width:1px;height:18px;background:#b1b1b1;"></div>
<span class="t" style="left:945.67px;top:207.00px;font-size:13.70px;color:#217346;">G</span>
<div class="a" style="left:1119px;top:207px;width:1px;height:18px;background:#b1b1b1;"></div>
<span class="t" style="left:1057.05px;top:207.00px;font-size:13.70px;color:#217346;">H</span>
<div class="a" style="left:1235px;top:207px;width:1px;height:18px;background:#b1b1b1;"></div>
<span class="t" style="left:1176.09px;top:207.00px;font-size:13.70px;color:#217346;">I</span>
<div class="a" style="left:1336px;top:207px;width:1px;height:18px;background:#b1b1b1;"></div>
<span class="t" style="left:1283.08px;top:207.00px;font-size:13.70px;color:#217346;">J</span>
<div class="a" style="left:1425px;top:207px;width:1px;height:18px;background:#b1b1b1;"></div>
<span class="t" style="left:1376.93px;top:207.00px;font-size:13.70px;color:#217346;">K</span>
<div class="a" style="left:1503px;top:207px;width:1px;height:18px;background:#b1b1b1;"></div>
<span class="t" style="left:1461.19px;top:207.00px;font-size:13.70px;color:#217346;">L</span>
<div class="a" style="left:1567px;top:207px;width:1px;height:19px;background:#c9c9c9;"></div>
<span class="t" style="left:1530.30px;top:207.00px;font-size:13.70px;color:#3b3b3b;">M</span>
<div class="a" style="left:1631px;top:207px;width:1px;height:19px;background:#c9c9c9;"></div>
<span class="t" style="left:1595.05px;top:207.00px;font-size:13.70px;color:#3b3b3b;">N</span>
<div class="a" style="left:1695px;top:207px;width:1px;height:19px;background:#c9c9c9;"></div>
<span class="t" style="left:1658.67px;top:207.00px;font-size:13.70px;color:#3b3b3b;">O</span>
<div class="a" style="left:1759px;top:207px;width:1px;height:19px;background:#c9c9c9;"></div>
<span class="t" style="left:1723.43px;top:207.00px;font-size:13.70px;color:#3b3b3b;">P</span>
<div class="a" style="left:1823px;top:207px;width:1px;height:19px;background:#c9c9c9;"></div>
<span class="t" style="left:1786.67px;top:207.00px;font-size:13.70px;color:#3b3b3b;">Q</span>
<div class="a" style="left:1887px;top:207px;width:1px;height:19px;background:#c9c9c9;"></div>
<span class="t" style="left:1851.05px;top:207.00px;font-size:13.70px;color:#3b3b3b;">R</span>
<svg class="a" style="left:9px;top:211px;" width="13" height="13" viewBox="0 0 13 13" fill="none"><path d="M12.5 0.5 V12.5 H0.5 Z" fill="#b7b7b7"/></svg>
<div class="a" style="left:25px;top:207px;width:1px;height:20px;background:#c9c9c9;"></div>
<div class="a" style="left:0px;top:227px;width:25px;height:764px;background:#e6e6e6;"></div>
<div class="a" style="left:0px;top:246px;width:24px;height:304px;background:#d2d2d2;"></div>
<div class="a" style="left:0px;top:227px;width:25px;height:763px;background:repeating-linear-gradient(to bottom, transparent 0, transparent 18px, #c9c9c9 18px, #c9c9c9 19px);"></div>
<div class="a" style="left:25px;top:227px;width:1px;height:17px;background:#8f8f8f;"></div>
<div class="a" style="left:25px;top:551px;width:1px;height:439px;background:#8f8f8f;"></div>
<span class="t" style="left:9.19px;top:227.00px;font-size:13.70px;color:#3b3b3b;">1</span>
<span class="t" style="left:9.19px;top:246.00px;font-size:13.70px;color:#217346;">2</span>
<span class="t" style="left:9.19px;top:265.00px;font-size:13.70px;color:#217346;">3</span>
<span class="t" style="left:9.19px;top:284.00px;font-size:13.70px;color:#217346;">4</span>
<span class="t" style="left:9.19px;top:303.00px;font-size:13.70px;color:#217346;">5</span>
<span class="t" style="left:9.19px;top:322.00px;font-size:13.70px;color:#217346;">6</span>
<span class="t" style="left:9.19px;top:341.00px;font-size:13.70px;color:#217346;">7</span>
<span class="t" style="left:9.19px;top:360.00px;font-size:13.70px;color:#217346;">8</span>
<span class="t" style="left:9.19px;top:379.00px;font-size:13.70px;color:#217346;">9</span>
<span class="t" style="left:5.75px;top:398.00px;font-size:13.70px;letter-spacing:-0.727px;color:#217346;">10</span>
<span class="t" style="left:5.75px;top:417.00px;font-size:13.70px;letter-spacing:0.288px;color:#217346;">11</span>
<span class="t" style="left:5.75px;top:436.00px;font-size:13.70px;letter-spacing:-0.727px;color:#217346;">12</span>
<span class="t" style="left:5.75px;top:455.00px;font-size:13.70px;letter-spacing:-0.727px;color:#217346;">13</span>
<span class="t" style="left:5.75px;top:474.00px;font-size:13.70px;letter-spacing:-0.727px;color:#217346;">14</span>
<span class="t" style="left:5.75px;top:493.00px;font-size:13.70px;letter-spacing:-0.727px;color:#217346;">15</span>
<span class="t" style="left:5.75px;top:512.00px;font-size:13.70px;letter-spacing:-0.727px;color:#217346;">16</span>
<span class="t" style="left:5.75px;top:531.00px;font-size:13.70px;letter-spacing:-0.727px;color:#217346;">17</span>
<span class="t" style="left:5.75px;top:550.00px;font-size:13.70px;letter-spacing:-0.727px;color:#3b3b3b;">18</span>
<span class="t" style="left:5.75px;top:569.00px;font-size:13.70px;letter-spacing:-0.727px;color:#3b3b3b;">19</span>
<span class="t" style="left:5.75px;top:588.00px;font-size:13.70px;letter-spacing:-0.727px;color:#3b3b3b;">20</span>
<span class="t" style="left:5.75px;top:607.00px;font-size:13.70px;letter-spacing:-0.727px;color:#3b3b3b;">21</span>
<span class="t" style="left:5.75px;top:626.00px;font-size:13.70px;letter-spacing:-0.727px;color:#3b3b3b;">22</span>
<span class="t" style="left:5.75px;top:645.00px;font-size:13.70px;letter-spacing:-0.727px;color:#3b3b3b;">23</span>
<span class="t" style="left:5.75px;top:664.00px;font-size:13.70px;letter-spacing:-0.727px;color:#3b3b3b;">24</span>
<span class="t" style="left:5.75px;top:683.00px;font-size:13.70px;letter-spacing:-0.727px;color:#3b3b3b;">25</span>
<span class="t" style="left:5.75px;top:702.00px;font-size:13.70px;letter-spacing:-0.727px;color:#3b3b3b;">26</span>
<span class="t" style="left:5.75px;top:721.00px;font-size:13.70px;letter-spacing:-0.727px;color:#3b3b3b;">27</span>
<span class="t" style="left:5.75px;top:740.00px;font-size:13.70px;letter-spacing:-0.727px;color:#3b3b3b;">28</span>
<span class="t" style="left:5.75px;top:759.00px;font-size:13.70px;letter-spacing:-0.727px;color:#3b3b3b;">29</span>
<span class="t" style="left:5.75px;top:778.00px;font-size:13.70px;letter-spacing:-0.727px;color:#3b3b3b;">30</span>
<span class="t" style="left:5.75px;top:797.00px;font-size:13.70px;letter-spacing:-0.727px;color:#3b3b3b;">31</span>
<span class="t" style="left:5.75px;top:816.00px;font-size:13.70px;letter-spacing:-0.727px;color:#3b3b3b;">32</span>
<span class="t" style="left:5.75px;top:835.00px;font-size:13.70px;letter-spacing:-0.727px;color:#3b3b3b;">33</span>
<span class="t" style="left:5.75px;top:854.00px;font-size:13.70px;letter-spacing:-0.727px;color:#3b3b3b;">34</span>
<span class="t" style="left:5.75px;top:873.00px;font-size:13.70px;letter-spacing:-0.727px;color:#3b3b3b;">35</span>
<span class="t" style="left:5.75px;top:892.00px;font-size:13.70px;letter-spacing:-0.727px;color:#3b3b3b;">36</span>
<span class="t" style="left:5.75px;top:911.00px;font-size:13.70px;letter-spacing:-0.727px;color:#3b3b3b;">37</span>
<span class="t" style="left:5.75px;top:930.00px;font-size:13.70px;letter-spacing:-0.727px;color:#3b3b3b;">38</span>
<span class="t" style="left:5.75px;top:949.00px;font-size:13.70px;letter-spacing:-0.727px;color:#3b3b3b;">39</span>
<span class="t" style="left:5.75px;top:968.00px;font-size:13.70px;letter-spacing:-0.727px;color:#3b3b3b;">40</span>
<div class="a" style="left:24px;top:244px;width:1481px;height:307px;border:2px solid #217346;box-shadow:inset 0 0 0 1px #fff;"></div>
<div class="a" style="left:1500px;top:546px;width:7px;height:7px;background:#217346;border:1px solid #fff;"></div>
<div class="a" style="left:1898px;top:226px;width:1px;height:765px;background:#9e9e9e;"></div>
<div class="a" style="left:0px;top:990px;width:1899px;height:1px;background:#9e9e9e;"></div>
<span class="t" style="left:27.82px;top:227.00px;font-size:13.70px;letter-spacing:1.028px;color:#000;">Meld</span>
<span class="t" style="left:101.81px;top:227.00px;font-size:13.70px;letter-spacing:0.494px;color:#000;">Agent</span>
<span class="t" style="left:228.81px;top:227.00px;font-size:13.70px;letter-spacing:0.787px;color:#000;">Title</span>
<span class="t" style="left:427.81px;top:227.00px;font-size:13.70px;letter-spacing:0.279px;color:#000;">Description</span>
<span class="t" style="left:758.82px;top:227.00px;font-size:13.70px;color:#000;">Hours</span>
<span class="t" style="left:801.82px;top:227.00px;font-size:13.70px;letter-spacing:-0.073px;color:#000;">Check in</span>
<span class="t" style="left:899.82px;top:227.00px;font-size:13.70px;letter-spacing:0.168px;color:#000;">Checkout</span>
<span class="t" style="left:1005.82px;top:227.00px;font-size:13.70px;letter-spacing:0.888px;color:#000;">Unit</span>
<span class="t" style="left:1121.82px;top:227.00px;font-size:13.70px;letter-spacing:0.077px;color:#000;">Address line 1</span>
<span class="t" style="left:1237.82px;top:227.00px;font-size:13.70px;letter-spacing:0.310px;color:#000;">City</span>
<span class="t" style="left:1338.82px;top:227.00px;font-size:13.70px;letter-spacing:0.072px;color:#000;">State</span>
<span class="t" style="left:1427.82px;top:227.00px;font-size:13.70px;letter-spacing:-0.027px;color:#000;">Postal code</span>
<span class="t" style="left:27.86px;top:246.00px;font-size:13.70px;color:#000;transform:scaleX(0.9403);transform-origin:0 0;">TWNJ0MP</span>
<span class="t" style="left:101.81px;top:246.00px;font-size:13.70px;letter-spacing:0.129px;color:#000;">Maintenance User</span>
<span class="t" style="left:228.81px;top:246.00px;font-size:13.70px;letter-spacing:0.315px;color:#000;">Changed light bulb</span>
<span class="t" style="left:428.50px;top:246.00px;font-size:13.70px;color:#000;">Installed a bulb in the hall fixture and tested</span>
<span class="t" style="left:777.88px;top:246.00px;font-size:13.70px;letter-spacing:0.138px;color:#000;">0.4</span>
<span class="t" style="left:805.38px;top:246.00px;font-size:13.70px;letter-spacing:-0.118px;color:#000;">5/4/2021 23:00</span>
<span class="t" style="left:911.38px;top:246.00px;font-size:13.70px;letter-spacing:-0.118px;color:#000;">5/4/2021 23:23</span>
<span class="t" style="left:1108.88px;top:246.00px;font-size:13.70px;color:#000;">1</span>
<span class="t" style="left:1121.82px;top:246.00px;font-size:13.70px;letter-spacing:-0.165px;color:#000;">101 Test Way</span>
<span class="t" style="left:1237.82px;top:246.00px;font-size:13.70px;letter-spacing:-0.026px;color:#000;">Rapid City</span>
<span class="t" style="left:1338.82px;top:246.00px;font-size:13.70px;letter-spacing:-0.013px;color:#000;">South Dakota</span>
<span class="t" style="left:1464.68px;top:246.00px;font-size:13.70px;letter-spacing:-0.389px;color:#000;">57701</span>
<span class="t" style="left:27.86px;top:265.00px;font-size:13.70px;color:#000;transform:scaleX(0.9403);transform-origin:0 0;">TWNJ0MP</span>
<span class="t" style="left:101.81px;top:265.00px;font-size:13.70px;letter-spacing:0.129px;color:#000;">Maintenance User</span>
<span class="t" style="left:228.81px;top:265.00px;font-size:13.70px;letter-spacing:0.305px;color:#000;">Replaced air filter</span>
<span class="t" style="left:777.88px;top:265.00px;font-size:13.70px;letter-spacing:0.138px;color:#000;">0.6</span>
<span class="t" style="left:805.38px;top:265.00px;font-size:13.70px;letter-spacing:-0.118px;color:#000;">5/4/2021 14:50</span>
<span class="t" style="left:911.38px;top:265.00px;font-size:13.70px;letter-spacing:-0.118px;color:#000;">5/4/2021 15:24</span>
<span class="t" style="left:1108.88px;top:265.00px;font-size:13.70px;color:#000;">1</span>
<span class="t" style="left:1121.82px;top:265.00px;font-size:13.70px;letter-spacing:-0.165px;color:#000;">101 Test Way</span>
<span class="t" style="left:1237.82px;top:265.00px;font-size:13.70px;letter-spacing:-0.026px;color:#000;">Rapid City</span>
<span class="t" style="left:1338.82px;top:265.00px;font-size:13.70px;letter-spacing:-0.013px;color:#000;">South Dakota</span>
<span class="t" style="left:1464.68px;top:265.00px;font-size:13.70px;letter-spacing:-0.389px;color:#000;">57701</span>
<span class="t" style="left:27.86px;top:284.00px;font-size:13.70px;color:#000;transform:scaleX(0.9413);transform-origin:0 0;">T78HX2M</span>
<span class="t" style="left:101.81px;top:284.00px;font-size:13.70px;letter-spacing:0.083px;color:#000;">Property Manager1</span>
<span class="t" style="left:228.81px;top:284.00px;font-size:13.70px;letter-spacing:0.154px;color:#000;">Dishwasher latch replacement</span>
<span class="t" style="left:1108.88px;top:284.00px;font-size:13.70px;color:#000;">2</span>
<span class="t" style="left:1121.82px;top:284.00px;font-size:13.70px;letter-spacing:-0.165px;color:#000;">101 Test Way</span>
<span class="t" style="left:1237.82px;top:284.00px;font-size:13.70px;letter-spacing:-0.026px;color:#000;">Rapid City</span>
<span class="t" style="left:1338.82px;top:284.00px;font-size:13.70px;letter-spacing:-0.013px;color:#000;">South Dakota</span>
<span class="t" style="left:1464.68px;top:284.00px;font-size:13.70px;letter-spacing:-0.389px;color:#000;">57701</span>
<span class="t" style="left:27.89px;top:303.00px;font-size:13.70px;color:#000;transform:scaleX(0.8872);transform-origin:0 0;">TQYBTYMB</span>
<span class="t" style="left:101.81px;top:303.00px;font-size:13.70px;letter-spacing:0.083px;color:#000;">Property Manager1</span>
<span class="t" style="left:228.81px;top:303.00px;font-size:13.70px;letter-spacing:-0.072px;color:#000;">Replaced door mat</span>
<span class="t" style="left:788.88px;top:303.00px;font-size:13.70px;color:#000;">2</span>
<span class="t" style="left:805.38px;top:303.00px;font-size:13.70px;letter-spacing:-0.118px;color:#000;">9/1/2021 10:00</span>
<span class="t" style="left:911.38px;top:303.00px;font-size:13.70px;letter-spacing:-0.118px;color:#000;">9/1/2021 12:00</span>
<span class="t" style="left:1005.82px;top:303.00px;font-size:13.70px;letter-spacing:-0.136px;color:#000;">122 York Drive</span>
<span class="t" style="left:1121.82px;top:303.00px;font-size:13.70px;letter-spacing:-0.136px;color:#000;">122 York Drive</span>
<span class="t" style="left:1237.82px;top:303.00px;font-size:13.70px;letter-spacing:0.599px;color:#000;">Yorktown</span>
<span class="t" style="left:1338.82px;top:303.00px;font-size:13.70px;letter-spacing:1.500px;color:#000;">VA</span>
<span class="t" style="left:1464.68px;top:303.00px;font-size:13.70px;letter-spacing:-0.389px;color:#000;">23690</span>
<span class="t" style="left:27.89px;top:322.00px;font-size:13.70px;color:#000;transform:scaleX(0.8872);transform-origin:0 0;">TQYBTYMB</span>
<span class="t" style="left:101.81px;top:322.00px;font-size:13.70px;letter-spacing:0.083px;color:#000;">Property Manager1</span>
<span class="t" style="left:228.81px;top:322.00px;font-size:13.70px;letter-spacing:-0.013px;color:#000;">Unclogged drain</span>
<span class="t" style="left:788.88px;top:322.00px;font-size:13.70px;color:#000;">2</span>
<span class="t" style="left:798.38px;top:322.00px;font-size:13.70px;letter-spacing:-0.153px;color:#000;">9/17/2021 12:00</span>
<span class="t" style="left:904.38px;top:322.00px;font-size:13.70px;letter-spacing:-0.153px;color:#000;">9/17/2021 14:00</span>
<span class="t" style="left:1005.82px;top:322.00px;font-size:13.70px;letter-spacing:-0.136px;color:#000;">122 York Drive</span>
<span class="t" style="left:1121.82px;top:322.00px;font-size:13.70px;letter-spacing:-0.136px;color:#000;">122 York Drive</span>
<span class="t" style="left:1237.82px;top:322.00px;font-size:13.70px;letter-spacing:0.599px;color:#000;">Yorktown</span>
<span class="t" style="left:1338.82px;top:322.00px;font-size:13.70px;letter-spacing:1.500px;color:#000;">VA</span>
<span class="t" style="left:1464.68px;top:322.00px;font-size:13.70px;letter-spacing:-0.389px;color:#000;">23690</span>
<span class="t" style="left:27.84px;top:341.00px;font-size:13.70px;color:#000;transform:scaleX(0.9618);transform-origin:0 0;">TN0MXVU</span>
<span class="t" style="left:101.81px;top:341.00px;font-size:13.70px;letter-spacing:0.083px;color:#000;">Property Manager1</span>
<span class="t" style="left:228.81px;top:341.00px;font-size:13.70px;letter-spacing:0.026px;color:#000;">Laeky faucet</span>
<span class="t" style="left:788.88px;top:341.00px;font-size:13.70px;color:#000;">1</span>
<span class="t" style="left:798.38px;top:341.00px;font-size:13.70px;letter-spacing:-0.153px;color:#000;">9/24/2021 20:00</span>
<span class="t" style="left:904.38px;top:341.00px;font-size:13.70px;letter-spacing:-0.153px;color:#000;">9/24/2021 21:00</span>
<span class="t" style="left:1108.88px;top:341.00px;font-size:13.70px;color:#000;">3</span>
<span class="t" style="left:1121.82px;top:341.00px;font-size:13.70px;letter-spacing:-0.165px;color:#000;">101 Test Way</span>
<span class="t" style="left:1237.82px;top:341.00px;font-size:13.70px;letter-spacing:-0.026px;color:#000;">Rapid City</span>
<span class="t" style="left:1338.82px;top:341.00px;font-size:13.70px;letter-spacing:-0.013px;color:#000;">South Dakota</span>
<span class="t" style="left:1464.68px;top:341.00px;font-size:13.70px;letter-spacing:-0.389px;color:#000;">57701</span>
<span class="t" style="left:27.88px;top:360.00px;font-size:13.70px;color:#000;transform:scaleX(0.9021);transform-origin:0 0;">TKNJBYAB</span>
<span class="t" style="left:101.81px;top:360.00px;font-size:13.70px;letter-spacing:0.083px;color:#000;">Property Manager1</span>
<span class="t" style="left:228.81px;top:360.00px;font-size:13.70px;letter-spacing:0.084px;color:#000;">Fixed lighting fixture</span>
<span class="t" style="left:788.88px;top:360.00px;font-size:13.70px;color:#000;">1</span>
<span class="t" style="left:798.38px;top:360.00px;font-size:13.70px;letter-spacing:-0.153px;color:#000;">9/17/2021 14:00</span>
<span class="t" style="left:904.38px;top:360.00px;font-size:13.70px;letter-spacing:-0.153px;color:#000;">9/17/2021 15:00</span>
<span class="t" style="left:1005.82px;top:360.00px;font-size:13.70px;letter-spacing:-0.136px;color:#000;">122 York Drive</span>
<span class="t" style="left:1121.82px;top:360.00px;font-size:13.70px;letter-spacing:-0.136px;color:#000;">122 York Drive</span>
<span class="t" style="left:1237.82px;top:360.00px;font-size:13.70px;letter-spacing:0.599px;color:#000;">Yorktown</span>
<span class="t" style="left:1338.82px;top:360.00px;font-size:13.70px;letter-spacing:1.500px;color:#000;">VA</span>
<span class="t" style="left:1464.68px;top:360.00px;font-size:13.70px;letter-spacing:-0.389px;color:#000;">23690</span>
<span class="t" style="left:27.88px;top:379.00px;font-size:13.70px;color:#000;transform:scaleX(0.9021);transform-origin:0 0;">TKNJBYAB</span>
<span class="t" style="left:101.81px;top:379.00px;font-size:13.70px;letter-spacing:0.083px;color:#000;">Property Manager1</span>
<span class="t" style="left:228.81px;top:379.00px;font-size:13.70px;letter-spacing:0.315px;color:#000;">Changed light bulb</span>
<span class="t" style="left:777.88px;top:379.00px;font-size:13.70px;letter-spacing:0.138px;color:#000;">0.5</span>
<span class="t" style="left:798.38px;top:379.00px;font-size:13.70px;letter-spacing:-0.153px;color:#000;">9/24/2021 22:00</span>
<span class="t" style="left:904.38px;top:379.00px;font-size:13.70px;letter-spacing:-0.153px;color:#000;">9/24/2021 22:30</span>
<span class="t" style="left:1005.82px;top:379.00px;font-size:13.70px;letter-spacing:-0.136px;color:#000;">122 York Drive</span>
<span class="t" style="left:1121.82px;top:379.00px;font-size:13.70px;letter-spacing:-0.136px;color:#000;">122 York Drive</span>
<span class="t" style="left:1237.82px;top:379.00px;font-size:13.70px;letter-spacing:0.599px;color:#000;">Yorktown</span>
<span class="t" style="left:1338.82px;top:379.00px;font-size:13.70px;letter-spacing:1.500px;color:#000;">VA</span>
<span class="t" style="left:1464.68px;top:379.00px;font-size:13.70px;letter-spacing:-0.389px;color:#000;">23690</span>
<span class="t" style="left:27.90px;top:398.00px;font-size:13.70px;color:#000;transform:scaleX(0.8724);transform-origin:0 0;">T1PDEGC</span>
<span class="t" style="left:101.81px;top:398.00px;font-size:13.70px;letter-spacing:0.083px;color:#000;">Property Manager1</span>
<span class="t" style="left:228.81px;top:398.00px;font-size:13.70px;letter-spacing:0.305px;color:#000;">Replaced air filter</span>
<span class="t" style="left:788.88px;top:398.00px;font-size:13.70px;color:#000;">1</span>
<span class="t" style="left:798.38px;top:398.00px;font-size:13.70px;letter-spacing:-0.153px;color:#000;">9/24/2021 15:00</span>
<span class="t" style="left:904.38px;top:398.00px;font-size:13.70px;letter-spacing:-0.153px;color:#000;">9/24/2021 16:00</span>
<span class="t" style="left:1005.82px;top:398.00px;font-size:13.70px;letter-spacing:-0.114px;color:#000;">10 Berkeley Place</span>
<span class="t" style="left:1121.82px;top:398.00px;font-size:13.70px;letter-spacing:-0.114px;color:#000;">10 Berkeley Place</span>
<span class="t" style="left:1237.82px;top:398.00px;font-size:13.70px;letter-spacing:0.455px;color:#000;">Newport News</span>
<span class="t" style="left:1338.82px;top:398.00px;font-size:13.70px;letter-spacing:1.500px;color:#000;">VA</span>
<span class="t" style="left:1464.68px;top:398.00px;font-size:13.70px;letter-spacing:-0.389px;color:#000;">23608</span>
<span class="t" style="left:27.88px;top:417.00px;font-size:13.70px;color:#000;transform:scaleX(0.9104);transform-origin:0 0;">TT1GUWC</span>
<span class="t" style="left:101.81px;top:417.00px;font-size:13.70px;letter-spacing:0.083px;color:#000;">Property Manager1</span>
<span class="t" style="left:228.81px;top:417.00px;font-size:13.70px;letter-spacing:0.154px;color:#000;">Dishwasher latch replacement</span>
<span class="t" style="left:788.88px;top:417.00px;font-size:13.70px;color:#000;">1</span>
<span class="t" style="left:805.38px;top:417.00px;font-size:13.70px;letter-spacing:-0.118px;color:#000;">9/20/2021 9:00</span>
<span class="t" style="left:904.38px;top:417.00px;font-size:13.70px;letter-spacing:-0.153px;color:#000;">9/20/2021 10:00</span>
<span class="t" style="left:1005.82px;top:417.00px;font-size:13.70px;letter-spacing:-0.114px;color:#000;">10 Berkeley Place</span>
<span class="t" style="left:1121.82px;top:417.00px;font-size:13.70px;letter-spacing:-0.114px;color:#000;">10 Berkeley Place</span>
<span class="t" style="left:1237.82px;top:417.00px;font-size:13.70px;letter-spacing:0.455px;color:#000;">Newport News</span>
<span class="t" style="left:1338.82px;top:417.00px;font-size:13.70px;letter-spacing:1.500px;color:#000;">VA</span>
<span class="t" style="left:1464.68px;top:417.00px;font-size:13.70px;letter-spacing:-0.389px;color:#000;">23608</span>
<span class="t" style="left:27.85px;top:436.00px;font-size:13.70px;color:#000;transform:scaleX(0.9422);transform-origin:0 0;">T61DWAL</span>
<span class="t" style="left:101.81px;top:436.00px;font-size:13.70px;letter-spacing:0.083px;color:#000;">Property Manager1</span>
<span class="t" style="left:228.81px;top:436.00px;font-size:13.70px;letter-spacing:-0.072px;color:#000;">Replaced door mat</span>
<span class="t" style="left:788.88px;top:436.00px;font-size:13.70px;color:#000;">1</span>
<span class="t" style="left:798.38px;top:436.00px;font-size:13.70px;letter-spacing:-0.153px;color:#000;">9/15/2021 13:00</span>
<span class="t" style="left:904.38px;top:436.00px;font-size:13.70px;letter-spacing:-0.153px;color:#000;">9/15/2021 14:00</span>
<span class="t" style="left:1005.82px;top:436.00px;font-size:13.70px;letter-spacing:-0.114px;color:#000;">10 Berkeley Place</span>
<span class="t" style="left:1121.82px;top:436.00px;font-size:13.70px;letter-spacing:-0.114px;color:#000;">10 Berkeley Place</span>
<span class="t" style="left:1237.82px;top:436.00px;font-size:13.70px;letter-spacing:0.455px;color:#000;">Newport News</span>
<span class="t" style="left:1338.82px;top:436.00px;font-size:13.70px;letter-spacing:1.500px;color:#000;">VA</span>
<span class="t" style="left:1464.68px;top:436.00px;font-size:13.70px;letter-spacing:-0.389px;color:#000;">23608</span>
<span class="t" style="left:27.89px;top:455.00px;font-size:13.70px;color:#000;transform:scaleX(0.8935);transform-origin:0 0;">TP9G7B</span>
<span class="t" style="left:101.81px;top:455.00px;font-size:13.70px;letter-spacing:0.083px;color:#000;">Property Manager1</span>
<span class="t" style="left:228.81px;top:455.00px;font-size:13.70px;letter-spacing:-0.013px;color:#000;">Unclogged drain</span>
<span class="t" style="left:788.88px;top:455.00px;font-size:13.70px;color:#000;">1</span>
<span class="t" style="left:798.38px;top:455.00px;font-size:13.70px;letter-spacing:-0.153px;color:#000;">9/24/2021 13:00</span>
<span class="t" style="left:904.38px;top:455.00px;font-size:13.70px;letter-spacing:-0.153px;color:#000;">9/24/2021 14:00</span>
<span class="t" style="left:1108.88px;top:455.00px;font-size:13.70px;color:#000;">4</span>
<span class="t" style="left:1121.82px;top:455.00px;font-size:13.70px;letter-spacing:-0.165px;color:#000;">101 Test Way</span>
<span class="t" style="left:1237.82px;top:455.00px;font-size:13.70px;letter-spacing:-0.026px;color:#000;">Rapid City</span>
<span class="t" style="left:1338.82px;top:455.00px;font-size:13.70px;letter-spacing:-0.013px;color:#000;">South Dakota</span>
<span class="t" style="left:1464.68px;top:455.00px;font-size:13.70px;letter-spacing:-0.389px;color:#000;">57701</span>
<span class="t" style="left:27.91px;top:474.00px;font-size:13.70px;color:#000;transform:scaleX(0.8620);transform-origin:0 0;">TNXEBJE</span>
<span class="t" style="left:101.81px;top:474.00px;font-size:13.70px;letter-spacing:0.129px;color:#000;">Maintenance User</span>
<span class="t" style="left:228.81px;top:474.00px;font-size:13.70px;letter-spacing:0.026px;color:#000;">Laeky faucet</span>
<span class="t" style="left:788.88px;top:474.00px;font-size:13.70px;color:#000;">1</span>
<span class="t" style="left:805.38px;top:474.00px;font-size:13.70px;letter-spacing:-0.118px;color:#000;">9/24/2021 8:30</span>
<span class="t" style="left:911.38px;top:474.00px;font-size:13.70px;letter-spacing:-0.118px;color:#000;">9/24/2021 9:30</span>
<span class="t" style="left:1108.88px;top:474.00px;font-size:13.70px;color:#000;">2</span>
<span class="t" style="left:1121.82px;top:474.00px;font-size:13.70px;letter-spacing:-0.165px;color:#000;">101 Test Way</span>
<span class="t" style="left:1237.82px;top:474.00px;font-size:13.70px;letter-spacing:-0.026px;color:#000;">Rapid City</span>
<span class="t" style="left:1338.82px;top:474.00px;font-size:13.70px;letter-spacing:-0.013px;color:#000;">South Dakota</span>
<span class="t" style="left:1464.68px;top:474.00px;font-size:13.70px;letter-spacing:-0.389px;color:#000;">57701</span>
<span class="t" style="left:27.91px;top:493.00px;font-size:13.70px;color:#000;transform:scaleX(0.8620);transform-origin:0 0;">TNXEBJE</span>
<span class="t" style="left:101.81px;top:493.00px;font-size:13.70px;letter-spacing:0.129px;color:#000;">Maintenance User</span>
<span class="t" style="left:228.81px;top:493.00px;font-size:13.70px;letter-spacing:0.084px;color:#000;">Fixed lighting fixture</span>
<span class="t" style="left:788.88px;top:493.00px;font-size:13.70px;color:#000;">1</span>
<span class="t" style="left:798.38px;top:493.00px;font-size:13.70px;letter-spacing:-0.153px;color:#000;">9/15/2021 10:30</span>
<span class="t" style="left:904.38px;top:493.00px;font-size:13.70px;letter-spacing:-0.081px;color:#000;">9/15/2021 11:30</span>
<span class="t" style="left:1108.88px;top:493.00px;font-size:13.70px;color:#000;">2</span>
<span class="t" style="left:1121.82px;top:493.00px;font-size:13.70px;letter-spacing:-0.165px;color:#000;">101 Test Way</span>
<span class="t" style="left:1237.82px;top:493.00px;font-size:13.70px;letter-spacing:-0.026px;color:#000;">Rapid City</span>
<span class="t" style="left:1338.82px;top:493.00px;font-size:13.70px;letter-spacing:-0.013px;color:#000;">South Dakota</span>
<span class="t" style="left:1464.68px;top:493.00px;font-size:13.70px;letter-spacing:-0.389px;color:#000;">57701</span>
<span class="t" style="left:27.85px;top:512.00px;font-size:13.70px;color:#000;transform:scaleX(0.9472);transform-origin:0 0;">TFPM9I0</span>
<span class="t" style="left:101.81px;top:512.00px;font-size:13.70px;letter-spacing:0.129px;color:#000;">Maintenance User</span>
<span class="t" style="left:228.81px;top:512.00px;font-size:13.70px;letter-spacing:0.305px;color:#000;">Replaced air filter</span>
<span class="t" style="left:427.81px;top:512.00px;font-size:13.70px;letter-spacing:0.260px;color:#000;">Honeywell filter for upper level HVAC system</span>
<span class="t" style="left:777.88px;top:512.00px;font-size:13.70px;letter-spacing:0.138px;color:#000;">1.9</span>
<span class="t" style="left:805.38px;top:512.00px;font-size:13.70px;letter-spacing:-0.118px;color:#000;">9/24/2021 8:05</span>
<span class="t" style="left:904.38px;top:512.00px;font-size:13.70px;letter-spacing:-0.153px;color:#000;">9/24/2021 10:00</span>
<span class="t" style="left:1108.88px;top:512.00px;font-size:13.70px;color:#000;">2</span>
<span class="t" style="left:1121.82px;top:512.00px;font-size:13.70px;letter-spacing:-0.165px;color:#000;">101 Test Way</span>
<span class="t" style="left:1237.82px;top:512.00px;font-size:13.70px;letter-spacing:-0.026px;color:#000;">Rapid City</span>
<span class="t" style="left:1338.82px;top:512.00px;font-size:13.70px;letter-spacing:-0.013px;color:#000;">South Dakota</span>
<span class="t" style="left:1464.68px;top:512.00px;font-size:13.70px;letter-spacing:-0.389px;color:#000;">57701</span>
<span class="t" style="left:27.89px;top:531.00px;font-size:13.70px;color:#000;transform:scaleX(0.8837);transform-origin:0 0;">TV4EC7T</span>
<span class="t" style="left:101.81px;top:531.00px;font-size:13.70px;letter-spacing:0.129px;color:#000;">Maintenance User</span>
<span class="t" style="left:228.81px;top:531.00px;font-size:13.70px;letter-spacing:0.154px;color:#000;">Dishwasher latch replacement</span>
<span class="t" style="left:427.81px;top:531.00px;font-size:13.70px;letter-spacing:0.156px;color:#000;">Frigidaire door latch- replaced</span>
<span class="t" style="left:777.88px;top:531.00px;font-size:13.70px;letter-spacing:0.138px;color:#000;">5.9</span>
<span class="t" style="left:805.38px;top:531.00px;font-size:13.70px;letter-spacing:-0.118px;color:#000;">9/17/2021 8:06</span>
<span class="t" style="left:904.38px;top:531.00px;font-size:13.70px;letter-spacing:-0.153px;color:#000;">9/17/2021 14:00</span>
<span class="t" style="left:1108.88px;top:531.00px;font-size:13.70px;color:#000;">2</span>
<span class="t" style="left:1121.82px;top:531.00px;font-size:13.70px;letter-spacing:-0.165px;color:#000;">101 Test Way</span>
<span class="t" style="left:1237.82px;top:531.00px;font-size:13.70px;letter-spacing:-0.026px;color:#000;">Rapid City</span>
<span class="t" style="left:1338.82px;top:531.00px;font-size:13.70px;letter-spacing:-0.013px;color:#000;">South Dakota</span>
<span class="t" style="left:1464.68px;top:531.00px;font-size:13.70px;letter-spacing:-0.389px;color:#000;">57701</span>
<div class="a" style="left:1902px;top:209px;width:15px;height:782px;background:#dadada;"></div>
<div class="a" style="left:1902px;top:209px;width:15px;height:14px;background:#fff;border:1px solid #ababab;"></div>
<svg class="a" style="left:1906px;top:213px;" width="7" height="5" viewBox="0 0 7 5" fill="none"><path d="M0 4.5 L3.5 0.5 L7 4.5 Z" fill="#6f6f6f"/></svg>
<div class="a" style="left:1902px;top:224px;width:15px;height:733px;background:#fff;border:1px solid #ababab;"></div>
<div class="a" style="left:1902px;top:977px;width:15px;height:14px;background:#fff;border:1px solid #ababab;"></div>
<svg class="a" style="left:1906px;top:982px;" width="7" height="5" viewBox="0 0 7 5" fill="none"><path d="M0 0.5 L3.5 4.5 L7 0.5 Z" fill="#6f6f6f"/></svg>
<div class="a" style="left:328px;top:251px;width:586px;height:267.5px;background:#f0f0f0;box-shadow:0 1px 10px 1px rgba(0,0,0,.45), 0 0 0 1px rgba(90,90,90,.35);"></div>
<div class="a" style="left:328px;top:251px;width:584px;height:30px;background:#fff;"></div>
<div class="a" style="left:912px;top:251px;width:2px;height:30px;background:#c9c9c9;opacity:.55;"></div>
<span class="t" style="left:335.40px;top:256.00px;font-size:12.00px;letter-spacing:-0.065px;color:#000;">Sort</span>
<span class="t" style="left:840.50px;top:256.00px;font-size:12.50px;color:#000;">?</span>
<svg class="a" style="left:883.5px;top:260px;" width="10.5" height="10.5" viewBox="0 0 10.5 10.5" fill="none"><path d="M0.3 0.3 L10.2 10.2 M10.2 0.3 L0.3 10.2" stroke="#000" stroke-width="1.05"/></svg>
<div class="a" style="left:334px;top:289px;width:81px;height:24px;background:#e1e1e1;border:1px solid #adadad;"></div>
<svg class="a" style="left:341.5px;top:294px;" width="15" height="15" viewBox="0 0 15 15" fill="none"><path d="M7.5 0.5 V14.5 M0.5 7.5 H14.5" stroke="#3fa34f" stroke-width="1.3"/></svg>
<span class="t" style="left:359.97px;top:291.00px;font-size:10.60px;letter-spacing:0.068px;color:#1a1a1a;"><u>A</u>dd Level</span>
<div class="a" style="left:418px;top:289px;width:92px;height:24px;background:#e1e1e1;border:1px solid #adadad;"></div>
<svg class="a" style="left:428px;top:295px;" width="12" height="12" viewBox="0 0 12 12" fill="none"><path d="M0.6 0.6 L11.4 11.4 M11.4 0.6 L0.6 11.4" stroke="#e8575c" stroke-width="1.4"/></svg>
<span class="t" style="left:443.97px;top:291.00px;font-size:10.60px;letter-spacing:-0.158px;color:#1a1a1a;"><u>D</u>elete Level</span>
<div class="a" style="left:513px;top:289px;width:86px;height:24px;background:#e1e1e1;border:1px solid #adadad;"></div>
<svg class="a" style="left:520.5px;top:293.5px;" width="17" height="17" viewBox="0 0 17 17" fill="none"><path d="M6 11.8 H0.6 V0.6 H6.6 L8 2" stroke="#444" stroke-width="1"/><path d="M6.2 3.6 H12.2 L15.6 7 V15.4 H6.2 Z" stroke="#444" stroke-width="1" fill="#fdfdfd"/><path d="M12 3.8 V7.2 H15.4" stroke="#444" stroke-width="0.9"/><path d="M8.6 10.3 H13.2 M8.6 12.6 H13.2" stroke="#666" stroke-width="0.9"/></svg>
<span class="t" style="left:538.97px;top:291.00px;font-size:10.60px;letter-spacing:-0.204px;color:#1a1a1a;"><u>C</u>opy Level</span>
<div class="a" style="left:600px;top:288px;width:1.3px;height:26px;background:#222;"></div>
<div class="a" style="left:603px;top:289px;width:24.5px;height:24px;background:#e1e1e1;border:1px solid #adadad;"></div>
<svg class="a" style="left:610px;top:298px;" width="11" height="7" viewBox="0 0 11 7" fill="none"><path d="M0.6 6 L5.5 1 L10.4 6" stroke="#b9b9b9" stroke-width="1.1"/></svg>
<div class="a" style="left:630.5px;top:289px;width:24.5px;height:24px;background:#e1e1e1;border:1px solid #adadad;"></div>
<svg class="a" style="left:637.5px;top:298px;" width="11" height="7" viewBox="0 0 11 7" fill="none"><path d="M0.6 1 L5.5 6 L10.4 1" stroke="#b9b9b9" stroke-width="1.1"/></svg>
<div class="a" style="left:658px;top:289px;width:61.5px;height:24px;background:#e1e1e1;border:1px solid #adadad;"></div>
<span class="t" style="left:665.97px;top:291.00px;font-size:10.60px;letter-spacing:0.036px;color:#1a1a1a;"><u>O</u>ptions...</span>
<div class="a" style="left:788px;top:294px;width:13px;height:13px;background:#fff;border:1px solid #333;"></div>
<svg class="a" style="left:790px;top:296px;" width="10" height="9" viewBox="0 0 10 9" fill="none"><path d="M0.8 4.6 L3.6 7.4 L9.2 1" stroke="#333" stroke-width="1.2"/></svg>
<span class="t" style="left:806.97px;top:291.00px;font-size:10.60px;letter-spacing:-0.015px;color:#1a1a1a;">My data has <u>h</u>eaders</span>
<div class="a" style="left:779px;top:288px;width:133px;height:26px;border:3px solid #c00000;box-shadow:2px 2px 4px rgba(0,0,0,.45);"></div>
<div class="a" style="left:334px;top:317px;width:574.5px;height:167.5px;background:#fff;border:1px solid #a7acb6;"></div>
<div class="a" style="left:527.5px;top:318px;width:1px;height:22px;background:#e5e5e5;"></div>
<div class="a" style="left:722px;top:318px;width:1px;height:22px;background:#e5e5e5;"></div>
<span class="t" style="left:338.97px;top:319.00px;font-size:10.60px;letter-spacing:-0.070px;color:#1a1a1a;">Column</span>
<span class="t" style="left:532.47px;top:319.00px;font-size:10.60px;letter-spacing:0.108px;color:#1a1a1a;">Sort On</span>
<span class="t" style="left:726.17px;top:319.00px;font-size:10.60px;letter-spacing:0.393px;color:#1a1a1a;">Order</span>
<div class="a" style="left:335px;top:339.5px;width:572.5px;height:21px;background:#e1e1e8;"></div>
<span class="t" style="left:336.47px;top:338.00px;font-size:10.60px;letter-spacing:0.184px;color:#1a1a1a;">Sort by</span>
<div class="a" style="left:383px;top:340px;width:135px;height:19.5px;background:#fff;border:1px solid #cfcfd6;"></div>
<div class="a" style="left:501px;top:341.5px;width:16.5px;height:17px;background:#e5f1fb;border:1px solid #0078d7;"></div>
<svg class="a" style="left:505px;top:347.5px;" width="9" height="6" viewBox="0 0 9 6" fill="none"><path d="M0.6 0.8 L4.5 4.7 L8.4 0.8" stroke="#444" stroke-width="1.1"/></svg>
<div class="a" style="left:529px;top:340px;width:184px;height:19.5px;background:#fff;border:1px solid #cfcfd6;"></div>
<span class="t" style="left:532.47px;top:340.00px;font-size:10.60px;letter-spacing:-0.115px;color:#1a1a1a;">Cell Values</span>
<div class="a" style="left:695px;top:341.5px;width:16.5px;height:17px;background:#e1e1e1;border:1px solid #c2c2c2;"></div>
<svg class="a" style="left:699px;top:347.5px;" width="9" height="6" viewBox="0 0 9 6" fill="none"><path d="M0.6 0.8 L4.5 4.7 L8.4 0.8" stroke="#666" stroke-width="1.1"/></svg>
<div class="a" style="left:723px;top:340px;width:183px;height:19.5px;background:#fff;border:1px solid #cfcfd6;"></div>
<span class="t" style="left:726.17px;top:340.00px;font-size:10.60px;letter-spacing:0.180px;color:#1a1a1a;">A to Z</span>
<div class="a" style="left:888px;top:341.5px;width:16.5px;height:17px;background:#e1e1e1;border:1px solid #c2c2c2;"></div>
<svg class="a" style="left:892px;top:347.5px;" width="9" height="6" viewBox="0 0 9 6" fill="none"><path d="M0.6 0.8 L4.5 4.7 L8.4 0.8" stroke="#666" stroke-width="1.1"/></svg>
<div class="a" style="left:759.5px;top:489px;width:69px;height:22px;background:#e1e1e1;border:2px solid #0078d7;"></div>
<span class="t" style="left:786.67px;top:490.00px;font-size:10.60px;letter-spacing:-0.646px;color:#1a1a1a;">OK</span>
<div class="a" style="left:839px;top:489px;width:69px;height:22px;background:#e1e1e1;border:1px solid #adadad;"></div>
<span class="t" style="left:857.47px;top:490.00px;font-size:10.60px;letter-spacing:-0.264px;color:#1a1a1a;">Cancel</span>
<div class="a" style="left:909px;top:508px;width:2px;height:2px;background:#bdbdbd;"></div>
<div class="a" style="left:909px;top:511.5px;width:2px;height:2px;background:#bdbdbd;"></div>
<div class="a" style="left:909px;top:515px;width:2px;height:2px;background:#bdbdbd;"></div>
<div class="a" style="left:905.5px;top:511.5px;width:2px;height:2px;background:#bdbdbd;"></div>
<div class="a" style="left:905.5px;top:515px;width:2px;height:2px;background:#bdbdbd;"></div>
<div class="a" style="left:902px;top:515px;width:2px;height:2px;background:#bdbdbd;"></div>
<div class="a" style="left:382px;top:360px;width:136px;height:164.5px;background:#fff;border:1px solid #767676;"></div>
<div class="a" style="left:383px;top:375.2px;width:134px;height:12.6px;background:#99c9ef;outline:1px dotted #555;outline-offset:-1px;"></div>
<span class="t" style="left:383.97px;top:358.00px;font-size:10.60px;letter-spacing:0.566px;color:#1a1a1a;">Meld</span>
<span class="t" style="left:383.97px;top:372.00px;font-size:10.60px;letter-spacing:0.120px;color:#1a1a1a;">Agent</span>
<span class="t" style="left:383.97px;top:385.00px;font-size:10.60px;letter-spacing:0.135px;color:#1a1a1a;">Title</span>
<span class="t" style="left:383.97px;top:399.00px;font-size:10.60px;letter-spacing:0.067px;color:#1a1a1a;">Description</span>
<span class="t" style="left:383.97px;top:413.00px;font-size:10.60px;letter-spacing:0.225px;color:#1a1a1a;">Hours</span>
<span class="t" style="left:383.97px;top:426.00px;font-size:10.60px;letter-spacing:-0.222px;color:#1a1a1a;">Check in</span>
<span class="t" style="left:383.97px;top:440.00px;font-size:10.60px;letter-spacing:-0.229px;color:#1a1a1a;">Checkout</span>
<span class="t" style="left:383.97px;top:454.00px;font-size:10.60px;letter-spacing:0.274px;color:#1a1a1a;">Unit</span>
<span class="t" style="left:383.97px;top:467.00px;font-size:10.60px;color:#1a1a1a;">Address line 1</span>
<span class="t" style="left:383.97px;top:481.00px;font-size:10.60px;letter-spacing:0.305px;color:#1a1a1a;">City</span>
<span class="t" style="left:383.97px;top:495.00px;font-size:10.60px;letter-spacing:-0.146px;color:#1a1a1a;">State</span>
<span class="t" style="left:383.97px;top:508.00px;font-size:10.60px;letter-spacing:-0.019px;color:#1a1a1a;">Postal code</span>
<div class="a" style="left:376px;top:372.5px;width:134px;height:19.5px;border:3px solid #c00000;box-shadow:2px 2px 4px rgba(0,0,0,.45);"></div>
<div class="a" style="left:0px;top:991px;width:1919px;height:27px;background:#e6e6e6;"></div>
<div class="a" style="left:1899px;top:990px;width:3px;height:1px;background:#e6e6e6;"></div>
<div class="a" style="left:1917px;top:990px;width:2px;height:1px;background:#e6e6e6;"></div>
<svg class="a" style="left:26.5px;top:999.5px;" width="5" height="8" viewBox="0 0 5 8" fill="none"><path d="M4.5 0.5 L0.5 4 L4.5 7.5 Z" fill="#c3c3c3"/></svg>
<svg class="a" style="left:55.5px;top:999.5px;" width="5" height="8" viewBox="0 0 5 8" fill="none"><path d="M0.5 0.5 L4.5 4 L0.5 7.5 Z" fill="#c3c3c3"/></svg>
<div class="a" style="left:100px;top:990px;width:227px;height:25px;background:#fff;border-left:1px solid #8f8f8f;border-right:1px solid #8f8f8f;"></div>
<div class="a" style="left:100px;top:1013px;width:227px;height:2px;background:#217346;"></div>
<span class="t" style="left:111.89px;top:994.00px;font-size:12.20px;letter-spacing:-0.037px;color:#217346;font-weight:bold;">work_logs_report__135_163249402</span>
<svg class="a" style="left:359.5px;top:995.5px;" width="17" height="17" viewBox="0 0 17 17" fill="none"><circle cx="8.5" cy="8.5" r="7.7" stroke="#8a8a8a" stroke-width="1.2"/><path d="M8.5 4.6 V12.4 M4.6 8.5 H12.4" stroke="#777" stroke-width="1.8"/></svg>
<div class="a" style="left:1152.3px;top:1000px;width:1.4px;height:1.4px;background:#9a9a9a;"></div>
<div class="a" style="left:1152.3px;top:1004px;width:1.4px;height:1.4px;background:#9a9a9a;"></div>
<div class="a" style="left:1152.3px;top:1008px;width:1.4px;height:1.4px;background:#9a9a9a;"></div>
<div class="a" style="left:1169px;top:997.5px;width:730px;height:14.5px;background:#dadada;"></div>
<div class="a" style="left:1169px;top:997.5px;width:14.5px;height:14.5px;background:#fff;border:1px solid #ababab;"></div>
<svg class="a" style="left:1173.5px;top:1001.5px;" width="5" height="7" viewBox="0 0 5 7" fill="none"><path d="M4.5 0 L0.5 3.5 L4.5 7 Z" fill="#6f6f6f"/></svg>
<div class="a" style="left:1184px;top:997.5px;width:661px;height:14.5px;background:#fff;border:1px solid #ababab;"></div>
<div class="a" style="left:1884px;top:997.5px;width:15px;height:14.5px;background:#fff;border:1px solid #ababab;"></div>
<svg class="a" style="left:1889.5px;top:1001.5px;" width="5" height="7" viewBox="0 0 5 7" fill="none"><path d="M0.5 0 L4.5 3.5 L0.5 7 Z" fill="#6f6f6f"/></svg>
<div class="a" style="left:0px;top:1018px;width:1919px;height:22px;background:#f3f2f1;border-top:1px solid #c8c8c8;"></div>
<span class="t" style="left:7.72px;top:1019.00px;font-size:11.70px;letter-spacing:-0.452px;color:#555;">Ready</span>
<svg class="a" style="left:58px;top:1023px;" width="15" height="12" viewBox="0 0 15 12" fill="none"><rect x="0.5" y="0.5" width="13" height="10.5" stroke="#555" stroke-width="1"/><path d="M0.5 3 H13.5 M2.5 5.2 H6 M2.5 7.2 H5 M2.5 9.2 H5" stroke="#555" stroke-width="0.9"/><circle cx="9.8" cy="8" r="3.2" fill="#f3f2f1" stroke="#444" stroke-width="1"/><circle cx="9.8" cy="8" r="1.4" fill="#444"/></svg>
<span class="t" style="left:1192.41px;top:1019.00px;font-size:11.70px;letter-spacing:-0.357px;color:#555;">Average: 28647.61687</span>
<span class="t" style="left:1318.91px;top:1019.00px;font-size:11.70px;letter-spacing:-0.045px;color:#555;">Count: 203</span>
<span class="t" style="left:1390.91px;top:1019.00px;font-size:11.70px;letter-spacing:-0.433px;color:#555;">Sum: 2062628.415</span>
<svg class="a" style="left:1502.5px;top:1022.5px;" width="14" height="13" viewBox="0 0 14 13" fill="none"><rect x="0.5" y="0.5" width="11.5" height="8" stroke="#555" stroke-width="1"/><path d="M3.5 11 H8" stroke="#555" stroke-width="1"/><circle cx="9.8" cy="8.6" r="2.6" fill="#f3f2f1" stroke="#444" stroke-width="1.1"/><path d="M9.8 4.8 V12.4 M6 8.6 H13.6" stroke="#444" stroke-width="0.9"/></svg>
<span class="t" style="left:1518.91px;top:1019.00px;font-size:11.70px;letter-spacing:-0.068px;color:#555;">Display Settings</span>
<div class="a" style="left:1620.5px;top:1019px;width:40px;height:21px;background:#d0cecc;"></div>
<svg class="a" style="left:1633.5px;top:1022.5px;" width="14" height="13" viewBox="0 0 14 13" fill="none"><rect x="0.5" y="0.5" width="12.5" height="11.5" stroke="#444" stroke-width="1"/><path d="M4.7 0.5 V12 M8.9 0.5 V12 M0.5 4.3 H13 M0.5 8.2 H13" stroke="#444" stroke-width="1"/></svg>
<svg class="a" style="left:1673.5px;top:1022.5px;" width="14" height="13" viewBox="0 0 14 13" fill="none"><rect x="0.5" y="0.5" width="12.5" height="11.5" stroke="#444" stroke-width="1"/><rect x="3" y="3" width="7.5" height="6.5" stroke="#444" stroke-width="1"/><path d="M4.5 5 H9 M4.5 7.3 H9" stroke="#444" stroke-width="0.8"/></svg>
<svg class="a" style="left:1713px;top:1022px;" width="14" height="13" viewBox="0 0 14 13" fill="none"><rect x="0.5" y="0.5" width="12.5" height="11.5" stroke="#444" stroke-width="1"/><path d="M5 0.5 V7 H13 M5 7 H0.5" stroke="#444" stroke-width="1"/></svg>
<div class="a" style="left:1746px;top:1028.5px;width:8px;height:1.2px;background:#444;"></div>
<div class="a" style="left:1759px;top:1029px;width:100px;height:1px;background:#8a8a8a;"></div>
<div class="a" style="left:1807px;top:1024px;width:5px;height:11px;background:#6d6d6d;"></div>
<div class="a" style="left:1864px;top:1028.5px;width:8.5px;height:1.2px;background:#444;"></div>
<div class="a" style="left:1867.7px;top:1024.8px;width:1.2px;height:8.5px;background:#444;"></div>
<span class="t" style="left:1884.82px;top:1019.00px;font-size:11.70px;letter-spacing:-0.773px;color:#555;">100%</span>
<div class="a" style="left:0px;top:1040px;width:1919px;height:2px;background:#2b2b2b;"></div>
</body></html>
